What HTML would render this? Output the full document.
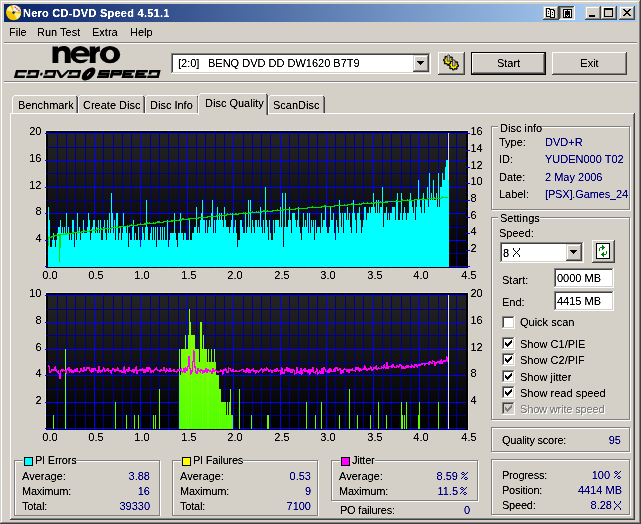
<!DOCTYPE html><html><head><meta charset="utf-8"><style>
html,body{margin:0;padding:0;background:#D4D0C8;}
#root{position:relative;width:641px;height:524px;overflow:hidden;background:#D4D0C8;font-family:"Liberation Sans", sans-serif;font-size:11px;line-height:13px;color:#000;}
#root div{position:absolute;box-sizing:border-box;white-space:pre;}
.t{filter:url(#crisp);}
.b{color:#00007F;}
</style></head><body><svg width="0" height="0" style="position:absolute"><filter id="crisp" x="-20%" y="-40%" width="140%" height="180%"><feComponentTransfer><feFuncA type="linear" slope="2" intercept="-0.35"/></feComponentTransfer></filter></svg><div id="root">
<div style="left:0px;top:0px;width:641px;height:524px;background:#404040"></div>
<div style="left:0px;top:0px;width:640px;height:523px;background:#D4D0C8"></div>
<div style="left:1px;top:1px;width:639px;height:522px;background:#808080"></div>
<div style="left:1px;top:1px;width:638px;height:521px;background:#FFFFFF"></div>
<div style="left:2px;top:2px;width:637px;height:520px;background:#D4D0C8"></div>
<div style="left:4px;top:4px;width:633px;height:18px;background:linear-gradient(to right,#0A246A 4px,#A6CAF0 584px)"></div>
<div class="t" style="left:23px;top:7px;text-align:left;color:#fff;font-weight:bold;letter-spacing:0.25px">Nero CD-DVD Speed 4.51.1</div>
<svg style="position:absolute;left:5px;top:4px" width="18" height="18">
<circle cx="8.6" cy="8.6" r="7.6" fill="#F5C400"/>
<path d="M8.6 8.6 L1.6 6 A7.6 7.6 0 0 1 5.2 1.8 Z" fill="#FFF59A"/>
<path d="M8.6 8.6 L16 10 A7.6 7.6 0 0 1 12 15.4 Z" fill="#FFF28A"/>
<path d="M8.6 8.6 L7.6 1.1 A7.6 7.6 0 0 1 16.1 7.6 Z" fill="#ECECF0"/>
<path d="M9.6 2.8 L15 7.6" stroke="#E84020" stroke-width="1.3" stroke-dasharray="1.6 0.9"/>
<circle cx="14.8" cy="3.6" r="0.7" fill="#F06030"/>
<circle cx="10.5" cy="7.8" r="0.6" fill="#F06030"/>
<circle cx="8.6" cy="8.6" r="1.3" fill="#0A246A"/>
</svg>
<div style="left:543px;top:6px;width:16px;height:14px;background:#404040"></div>
<div style="left:543px;top:6px;width:15px;height:13px;background:#D4D0C8"></div>
<div style="left:544px;top:7px;width:14px;height:12px;background:#808080"></div>
<div style="left:544px;top:7px;width:13px;height:11px;background:#FFFFFF"></div>
<div style="left:545px;top:8px;width:12px;height:10px;background:#D4D0C8"></div>
<svg style="position:absolute;left:543px;top:6px" width="16" height="14" shape-rendering="crispEdges"><path fill="#000" d="M3 2h4v1h1v8h-5zM7 3h4v1h1v8h-5z"/><path fill="#F4F2EE" d="M4 3h2v1h1v6h-3zM8 4h2v1h1v6h-3z"/><path fill="#000" d="M5 5h1v1h-1zM5 7h1v1h-1zM9 6h1v1h-1zM9 8h1v1h-1z"/></svg>
<div style="left:559px;top:6px;width:16px;height:14px;background:#FFFFFF"></div>
<div style="left:559px;top:6px;width:15px;height:13px;background:#404040"></div>
<div style="left:560px;top:7px;width:14px;height:12px;background:#D4D0C8"></div>
<div style="left:560px;top:7px;width:13px;height:11px;background:#808080"></div>
<div style="left:561px;top:8px;width:12px;height:10px;background:#D4D0C8"></div>
<svg style="position:absolute;left:559px;top:6px" width="16" height="14" shape-rendering="crispEdges"><path fill="#000" d="M4 3h9v9h-9z"/><path fill="#F4F2EE" d="M5 4h1v7h-1zM11 4h1v7h-1zM6 4h5v1h-5zM7 9h1v1h-1zM9 9h1v1h-1zM8 10h1v1h-1z"/><path fill="#000" d="M8 4h1v2h-1z"/></svg>
<div style="left:585px;top:6px;width:16px;height:14px;background:#404040"></div>
<div style="left:585px;top:6px;width:15px;height:13px;background:#D4D0C8"></div>
<div style="left:586px;top:7px;width:14px;height:12px;background:#808080"></div>
<div style="left:586px;top:7px;width:13px;height:11px;background:#FFFFFF"></div>
<div style="left:587px;top:8px;width:12px;height:10px;background:#D4D0C8"></div>
<svg style="position:absolute;left:585px;top:6px" width="16" height="14" shape-rendering="crispEdges"><path fill="#000" d="M4 9h6v2h-6z"/></svg>
<div style="left:601px;top:6px;width:16px;height:14px;background:#404040"></div>
<div style="left:601px;top:6px;width:15px;height:13px;background:#D4D0C8"></div>
<div style="left:602px;top:7px;width:14px;height:12px;background:#808080"></div>
<div style="left:602px;top:7px;width:13px;height:11px;background:#FFFFFF"></div>
<div style="left:603px;top:8px;width:12px;height:10px;background:#D4D0C8"></div>
<svg style="position:absolute;left:601px;top:6px" width="16" height="14" shape-rendering="crispEdges"><path fill="#000" d="M3 2h9v9h-9z"/><path fill="#D4D0C8" d="M4 4h7v6h-7z"/></svg>
<div style="left:619px;top:6px;width:16px;height:14px;background:#404040"></div>
<div style="left:619px;top:6px;width:15px;height:13px;background:#D4D0C8"></div>
<div style="left:620px;top:7px;width:14px;height:12px;background:#808080"></div>
<div style="left:620px;top:7px;width:13px;height:11px;background:#FFFFFF"></div>
<div style="left:621px;top:8px;width:12px;height:10px;background:#D4D0C8"></div>
<svg style="position:absolute;left:619px;top:6px" width="16" height="14" shape-rendering="crispEdges"><path fill="#000" d="M4 3h2v1h-2zM10 3h2v1h-2zM5 4h2v1h-2zM9 4h2v1h-2zM6 5h4v1h-4zM7 6h2v1h-2zM6 7h4v1h-4zM5 8h2v1h-2zM9 8h2v1h-2zM4 9h2v1h-2zM10 9h2v1h-2z"/></svg>
<div class="t" style="left:9px;top:26px;text-align:left;">File</div>
<div class="t" style="left:37px;top:26px;text-align:left;">Run Test</div>
<div class="t" style="left:92px;top:26px;text-align:left;">Extra</div>
<div class="t" style="left:130px;top:26px;text-align:left;">Help</div>
<div style="left:4px;top:42px;width:633px;height:1px;background:#808080"></div>
<div style="left:4px;top:43px;width:633px;height:1px;background:#FFFFFF"></div>
<svg style="position:absolute;left:0;top:0" width="170" height="84">
<g fill="#000">
<path d="M52.5 63V46.5H58V48.3C59.3 46.8 61.3 46 63.8 46C68 46 70.7 48.6 70.7 52.6V63H64.8V53.6C64.8 51.9 63.8 50.8 62.1 50.8C59.6 50.8 58.3 52.3 58.3 54.6V63Z"/>
<ellipse cx="80.2" cy="54.6" rx="9.7" ry="8.7"/>
<path d="M89.7 63V46.5H95.3V48.5C96.5 46.9 98 46.2 99.9 46.2V51.5C97.2 51.5 95.6 52.8 95.6 55.6V63Z"/>
<ellipse cx="110" cy="54.6" rx="10.2" ry="8.7"/>
</g>
<g fill="#D4D0C8">
<path d="M75.8 53.3C76.2 51.6 77.8 50.4 80.3 50.4C82.8 50.4 84.3 51.6 84.7 53.3Z"/>
<path d="M75.8 56.4H90V59.5H84.5C83.8 60 82.5 60 80.4 59.9C78 59.8 76.2 58.4 75.8 56.4Z"/>
<ellipse cx="110" cy="54.8" rx="4.1" ry="5"/>
</g>
<g transform="translate(0,78) skewX(-14) translate(0,-78)" fill="#000">
<rect x="14" y="69.9" width="2.7" height="8.1" rx="0.6"/><rect x="14.6" y="69.9" width="10.6" height="2.6" rx="0.6"/><rect x="14" y="75.5" width="10.6" height="2.6" rx="0.6"/>
<rect x="26.6" y="69.9" width="10.6" height="2.6" rx="0.6"/><rect x="35" y="69.9" width="2.7" height="8.1" rx="0.6"/><rect x="26" y="75.5" width="11.2" height="2.6" rx="0.6"/><rect x="26.6" y="69.9" width="2.7" height="4.6"/>
<rect x="39.3" y="72.8" width="2.2" height="2.6"/>
<rect x="43.6" y="69.9" width="10.6" height="2.6" rx="0.6"/><rect x="52" y="69.9" width="2.7" height="8.1" rx="0.6"/><rect x="43" y="75.5" width="11.2" height="2.6" rx="0.6"/><rect x="43.6" y="69.9" width="2.7" height="4.6"/>
<polygon points="54,70 56.6,70 61.2,75.6 65.6,70 68.2,70 62.2,78 59.8,78"/>
<rect x="67.8" y="69.9" width="11" height="2.6" rx="0.6"/><rect x="76.6" y="69.9" width="2.7" height="8.1" rx="0.6"/><rect x="67.2" y="75.5" width="11.6" height="2.6" rx="0.6"/><rect x="67.8" y="69.9" width="2.7" height="4.6"/>
<rect x="98" y="69.9" width="10.4" height="2.6" rx="0.6"/><rect x="97.4" y="69.9" width="2.7" height="5" rx="0.6"/><rect x="97.4" y="72.8" width="10.6" height="2.6"/><rect x="105.8" y="72.8" width="2.7" height="5" rx="0.6"/><rect x="96.8" y="75.5" width="11.2" height="2.6" rx="0.6"/>
<rect x="109.6" y="69.9" width="10.6" height="2.6" rx="0.6"/><rect x="109.6" y="69.9" width="2.7" height="8.1" rx="0.6"/><rect x="118" y="69.9" width="2.7" height="5" rx="0.6"/><rect x="109.6" y="72.8" width="10.6" height="2.6"/>
<rect x="121.6" y="69.9" width="11.6" height="2.6" rx="0.6"/><rect x="121.6" y="69.9" width="2.7" height="8.1" rx="0.6"/><rect x="121.6" y="72.8" width="9" height="2.6"/><rect x="121.6" y="75.5" width="11.6" height="2.6" rx="0.6"/>
<rect x="134.6" y="69.9" width="11.6" height="2.6" rx="0.6"/><rect x="134.6" y="69.9" width="2.7" height="8.1" rx="0.6"/><rect x="134.6" y="72.8" width="9" height="2.6"/><rect x="134.6" y="75.5" width="11.6" height="2.6" rx="0.6"/>
<rect x="147.6" y="69.9" width="10.6" height="2.6" rx="0.6"/><rect x="156" y="69.9" width="2.7" height="8.1" rx="0.6"/><rect x="147" y="75.5" width="11.2" height="2.6" rx="0.6"/><rect x="147.6" y="69.9" width="2.7" height="4.6"/>
</g>
<ellipse cx="88.6" cy="74" rx="8.3" ry="4.6" transform="rotate(-42 88.6 74)" fill="#000"/>
<path d="M87.2 75.6 L90.2 72.2" stroke="#D4D0C8" stroke-width="1.1"/>
</svg>
<div style="left:171px;top:53px;width:260px;height:21px;background:#FFFFFF"></div>
<div style="left:171px;top:53px;width:259px;height:20px;background:#808080"></div>
<div style="left:172px;top:54px;width:258px;height:19px;background:#D4D0C8"></div>
<div style="left:172px;top:54px;width:257px;height:18px;background:#404040"></div>
<div style="left:173px;top:55px;width:256px;height:17px;background:#FFFFFF"></div>
<div class="t" style="left:178px;top:57px;text-align:left;">[2:0]</div>
<div class="t" style="left:208px;top:57px;text-align:left;">BENQ DVD DD DW1620 B7T9</div>
<div style="left:413px;top:55px;width:16px;height:17px;background:#404040"></div>
<div style="left:413px;top:55px;width:15px;height:16px;background:#D4D0C8"></div>
<div style="left:414px;top:56px;width:14px;height:15px;background:#808080"></div>
<div style="left:414px;top:56px;width:13px;height:14px;background:#FFFFFF"></div>
<div style="left:415px;top:57px;width:12px;height:13px;background:#D4D0C8"></div>
<svg style="position:absolute;left:413px;top:55px" width="16" height="17" shape-rendering="crispEdges"><path fill="#000" d="M4 6h7v1h-7zM5 7h5v1h-5zM6 8h3v1h-3zM7 9h1v1h-1z"/></svg>
<div style="left:438px;top:52px;width:27px;height:23px;background:#404040"></div>
<div style="left:438px;top:52px;width:26px;height:22px;background:#FFFFFF"></div>
<div style="left:439px;top:53px;width:25px;height:21px;background:#808080"></div>
<div style="left:439px;top:53px;width:24px;height:20px;background:#D4D0C8"></div>
<div style="left:440px;top:54px;width:23px;height:19px;background:#D4D0C8"></div>
<svg style="position:absolute;left:438px;top:52px" width="27" height="23">
<polygon points="10.40,3.60 11.34,3.69 11.82,4.98 12.46,5.32 13.79,5.01 14.39,5.73 13.82,6.98 14.03,7.68 15.20,8.40 15.11,9.34 13.82,9.82 13.48,10.46 13.79,11.79 13.07,12.39 11.82,11.82 11.12,12.03 10.40,13.20 9.46,13.11 8.98,11.82 8.34,11.48 7.01,11.79 6.41,11.07 6.98,9.82 6.77,9.12 5.60,8.40 5.69,7.46 6.98,6.98 7.32,6.34 7.01,5.01 7.73,4.41 8.98,4.98 9.68,4.77" fill="#FFF200" stroke="#000" stroke-width="1.2" stroke-linejoin="round"/>
<polygon points="15.70,8.40 16.64,8.49 17.12,9.78 17.76,10.12 19.09,9.81 19.69,10.53 19.12,11.78 19.33,12.48 20.50,13.20 20.41,14.14 19.12,14.62 18.78,15.26 19.09,16.59 18.37,17.19 17.12,16.62 16.42,16.83 15.70,18.00 14.76,17.91 14.28,16.62 13.64,16.28 12.31,16.59 11.71,15.87 12.28,14.62 12.07,13.92 10.90,13.20 10.99,12.26 12.28,11.78 12.62,11.14 12.31,9.81 13.03,9.21 14.28,9.78 14.98,9.57" fill="#FFF200" stroke="#000" stroke-width="1.2" stroke-linejoin="round"/>
<path d="M9.2 4.2 L10.5 2.6 L11.8 4.2 V9.2 H9.2Z" fill="#B8B8C8" stroke="#202020" stroke-width="0.7"/>
<path d="M14.5 9 L15.8 7.4 L17.1 9 V14 H14.5Z" fill="#B8B8C8" stroke="#202020" stroke-width="0.7"/>
</svg>
<div style="left:471px;top:52px;width:75px;height:23px;background:#000"></div>
<div style="left:472px;top:53px;width:73px;height:21px;background:#404040"></div>
<div style="left:472px;top:53px;width:72px;height:20px;background:#FFFFFF"></div>
<div style="left:473px;top:54px;width:71px;height:19px;background:#808080"></div>
<div style="left:473px;top:54px;width:70px;height:18px;background:#D4D0C8"></div>
<div style="left:474px;top:55px;width:69px;height:17px;background:#D4D0C8"></div>
<div class="t" style="left:472px;top:57px;width:73px;text-align:center;">Start</div>
<div style="left:552px;top:52px;width:75px;height:23px;background:#404040"></div>
<div style="left:552px;top:52px;width:74px;height:22px;background:#FFFFFF"></div>
<div style="left:553px;top:53px;width:73px;height:21px;background:#808080"></div>
<div style="left:553px;top:53px;width:72px;height:20px;background:#D4D0C8"></div>
<div style="left:554px;top:54px;width:71px;height:19px;background:#D4D0C8"></div>
<div class="t" style="left:552px;top:57px;width:75px;text-align:center;">Exit</div>
<div style="left:4px;top:81px;width:633px;height:1px;background:#808080"></div>
<div style="left:4px;top:82px;width:633px;height:1px;background:#FFFFFF"></div>
<div style="left:10px;top:113px;width:625px;height:407px;background:#404040"></div>
<div style="left:10px;top:113px;width:624px;height:406px;background:#FFFFFF"></div>
<div style="left:11px;top:114px;width:623px;height:405px;background:#808080"></div>
<div style="left:11px;top:114px;width:622px;height:404px;background:#D4D0C8"></div>
<div style="left:12px;top:97px;width:1px;height:16px;background:#FFFFFF"></div>
<div style="left:13px;top:96px;width:1px;height:1px;background:#FFFFFF"></div>
<div style="left:14px;top:95px;width:62px;height:1px;background:#FFFFFF"></div>
<div style="left:76px;top:96px;width:1px;height:17px;background:#808080"></div>
<div style="left:77px;top:97px;width:1px;height:16px;background:#404040"></div>
<div style="left:76px;top:96px;width:1px;height:1px;background:#404040"></div>
<div style="left:13px;top:97px;width:63px;height:16px;background:#D4D0C8"></div>
<div style="left:14px;top:96px;width:62px;height:1px;background:#D4D0C8"></div>
<div class="t" style="left:18px;top:99px;text-align:left;">Benchmark</div>
<div style="left:78px;top:97px;width:1px;height:16px;background:#FFFFFF"></div>
<div style="left:79px;top:96px;width:1px;height:1px;background:#FFFFFF"></div>
<div style="left:80px;top:95px;width:63px;height:1px;background:#FFFFFF"></div>
<div style="left:143px;top:96px;width:1px;height:17px;background:#808080"></div>
<div style="left:144px;top:97px;width:1px;height:16px;background:#404040"></div>
<div style="left:143px;top:96px;width:1px;height:1px;background:#404040"></div>
<div style="left:79px;top:97px;width:64px;height:16px;background:#D4D0C8"></div>
<div style="left:80px;top:96px;width:63px;height:1px;background:#D4D0C8"></div>
<div class="t" style="left:83px;top:99px;text-align:left;">Create Disc</div>
<div style="left:145px;top:97px;width:1px;height:16px;background:#FFFFFF"></div>
<div style="left:146px;top:96px;width:1px;height:1px;background:#FFFFFF"></div>
<div style="left:147px;top:95px;width:50px;height:1px;background:#FFFFFF"></div>
<div style="left:197px;top:96px;width:1px;height:17px;background:#808080"></div>
<div style="left:198px;top:97px;width:1px;height:16px;background:#404040"></div>
<div style="left:197px;top:96px;width:1px;height:1px;background:#404040"></div>
<div style="left:146px;top:97px;width:51px;height:16px;background:#D4D0C8"></div>
<div style="left:147px;top:96px;width:50px;height:1px;background:#D4D0C8"></div>
<div class="t" style="left:150px;top:99px;text-align:left;">Disc Info</div>
<div style="left:268px;top:97px;width:1px;height:16px;background:#FFFFFF"></div>
<div style="left:269px;top:96px;width:1px;height:1px;background:#FFFFFF"></div>
<div style="left:270px;top:95px;width:53px;height:1px;background:#FFFFFF"></div>
<div style="left:323px;top:96px;width:1px;height:17px;background:#808080"></div>
<div style="left:324px;top:97px;width:1px;height:16px;background:#404040"></div>
<div style="left:323px;top:96px;width:1px;height:1px;background:#404040"></div>
<div style="left:269px;top:97px;width:54px;height:16px;background:#D4D0C8"></div>
<div style="left:270px;top:96px;width:53px;height:1px;background:#D4D0C8"></div>
<div class="t" style="left:273px;top:99px;text-align:left;">ScanDisc</div>
<div style="left:198px;top:95px;width:1px;height:20px;background:#FFFFFF"></div>
<div style="left:199px;top:94px;width:1px;height:1px;background:#FFFFFF"></div>
<div style="left:200px;top:93px;width:66px;height:1px;background:#FFFFFF"></div>
<div style="left:266px;top:94px;width:1px;height:21px;background:#808080"></div>
<div style="left:267px;top:95px;width:1px;height:20px;background:#404040"></div>
<div style="left:266px;top:94px;width:1px;height:1px;background:#404040"></div>
<div style="left:199px;top:95px;width:67px;height:20px;background:#D4D0C8"></div>
<div style="left:200px;top:94px;width:66px;height:1px;background:#D4D0C8"></div>
<div class="t" style="left:205px;top:97px;text-align:left;">Disc Quality</div>
<svg style="position:absolute;left:0;top:0" width="641" height="524" shape-rendering="crispEdges">
<defs><linearGradient id="bg1" x1="0" y1="0" x2="0" y2="1"><stop offset="0" stop-color="#242424"/><stop offset="1" stop-color="#000"/></linearGradient>
<linearGradient id="gr" gradientUnits="userSpaceOnUse" x1="0" y1="295" x2="0" y2="428"><stop offset="0" stop-color="#94FF00"/><stop offset="1" stop-color="#52FF00"/></linearGradient></defs>
<rect x="46" y="130" width="422" height="1" fill="#E4E1DA"/>
<rect x="45" y="131" width="1" height="137" fill="#E4E1DA"/>
<rect x="468" y="131" width="1" height="137" fill="#E4E1DA"/>
<rect x="46" y="131" width="422" height="137" fill="#000"/>
<rect x="48" y="133" width="418" height="134" fill="url(#bg1)"/>
<rect x="57" y="133" width="1" height="135" fill="#000090"/>
<rect x="66" y="133" width="1" height="135" fill="#000090"/>
<rect x="75" y="133" width="1" height="135" fill="#000090"/>
<rect x="85" y="133" width="1" height="135" fill="#000090"/>
<rect x="94" y="133" width="1" height="135" fill="#0000FF"/>
<rect x="103" y="133" width="1" height="135" fill="#000090"/>
<rect x="113" y="133" width="1" height="135" fill="#000090"/>
<rect x="122" y="133" width="1" height="135" fill="#000090"/>
<rect x="131" y="133" width="1" height="135" fill="#000090"/>
<rect x="140" y="133" width="1" height="135" fill="#0000FF"/>
<rect x="150" y="133" width="1" height="135" fill="#000090"/>
<rect x="159" y="133" width="1" height="135" fill="#000090"/>
<rect x="168" y="133" width="1" height="135" fill="#000090"/>
<rect x="178" y="133" width="1" height="135" fill="#000090"/>
<rect x="187" y="133" width="1" height="135" fill="#0000FF"/>
<rect x="196" y="133" width="1" height="135" fill="#000090"/>
<rect x="205" y="133" width="1" height="135" fill="#000090"/>
<rect x="215" y="133" width="1" height="135" fill="#000090"/>
<rect x="224" y="133" width="1" height="135" fill="#000090"/>
<rect x="233" y="133" width="1" height="135" fill="#0000FF"/>
<rect x="243" y="133" width="1" height="135" fill="#000090"/>
<rect x="252" y="133" width="1" height="135" fill="#000090"/>
<rect x="261" y="133" width="1" height="135" fill="#000090"/>
<rect x="270" y="133" width="1" height="135" fill="#000090"/>
<rect x="280" y="133" width="1" height="135" fill="#0000FF"/>
<rect x="289" y="133" width="1" height="135" fill="#000090"/>
<rect x="298" y="133" width="1" height="135" fill="#000090"/>
<rect x="308" y="133" width="1" height="135" fill="#000090"/>
<rect x="317" y="133" width="1" height="135" fill="#000090"/>
<rect x="326" y="133" width="1" height="135" fill="#0000FF"/>
<rect x="335" y="133" width="1" height="135" fill="#000090"/>
<rect x="345" y="133" width="1" height="135" fill="#000090"/>
<rect x="354" y="133" width="1" height="135" fill="#000090"/>
<rect x="363" y="133" width="1" height="135" fill="#000090"/>
<rect x="373" y="133" width="1" height="135" fill="#0000FF"/>
<rect x="382" y="133" width="1" height="135" fill="#000090"/>
<rect x="391" y="133" width="1" height="135" fill="#000090"/>
<rect x="401" y="133" width="1" height="135" fill="#000090"/>
<rect x="410" y="133" width="1" height="135" fill="#000090"/>
<rect x="419" y="133" width="1" height="135" fill="#0000FF"/>
<rect x="428" y="133" width="1" height="135" fill="#000090"/>
<rect x="438" y="133" width="1" height="135" fill="#000090"/>
<rect x="447" y="133" width="1" height="135" fill="#000090"/>
<rect x="456" y="133" width="1" height="135" fill="#000090"/>
<rect x="46" y="266" width="420" height="1" fill="#0000FF"/>
<rect x="45" y="266" width="3" height="1" fill="#0000FF"/>
<rect x="48" y="253" width="418" height="1" fill="#000090"/>
<rect x="46" y="253" width="2" height="1" fill="#000090"/>
<rect x="46" y="240" width="420" height="1" fill="#0000FF"/>
<rect x="45" y="240" width="3" height="1" fill="#0000FF"/>
<rect x="48" y="227" width="418" height="1" fill="#000090"/>
<rect x="46" y="227" width="2" height="1" fill="#000090"/>
<rect x="46" y="213" width="420" height="1" fill="#0000FF"/>
<rect x="45" y="213" width="3" height="1" fill="#0000FF"/>
<rect x="48" y="200" width="418" height="1" fill="#000090"/>
<rect x="46" y="200" width="2" height="1" fill="#000090"/>
<rect x="46" y="187" width="420" height="1" fill="#0000FF"/>
<rect x="45" y="187" width="3" height="1" fill="#0000FF"/>
<rect x="48" y="173" width="418" height="1" fill="#000090"/>
<rect x="46" y="173" width="2" height="1" fill="#000090"/>
<rect x="46" y="160" width="420" height="1" fill="#0000FF"/>
<rect x="45" y="160" width="3" height="1" fill="#0000FF"/>
<rect x="48" y="147" width="418" height="1" fill="#000090"/>
<rect x="46" y="147" width="2" height="1" fill="#000090"/>
<rect x="46" y="133" width="420" height="1" fill="#0000FF"/>
<rect x="45" y="133" width="3" height="1" fill="#0000FF"/>
<rect x="466" y="266" width="4" height="1" fill="#0000FF"/>
<rect x="466" y="258" width="2" height="1" fill="#000090"/>
<rect x="466" y="250" width="4" height="1" fill="#0000FF"/>
<rect x="466" y="242" width="2" height="1" fill="#000090"/>
<rect x="466" y="233" width="4" height="1" fill="#0000FF"/>
<rect x="466" y="225" width="2" height="1" fill="#000090"/>
<rect x="466" y="217" width="4" height="1" fill="#0000FF"/>
<rect x="466" y="208" width="2" height="1" fill="#000090"/>
<rect x="466" y="200" width="4" height="1" fill="#0000FF"/>
<rect x="466" y="192" width="2" height="1" fill="#000090"/>
<rect x="466" y="183" width="4" height="1" fill="#0000FF"/>
<rect x="466" y="175" width="2" height="1" fill="#000090"/>
<rect x="466" y="167" width="4" height="1" fill="#0000FF"/>
<rect x="466" y="158" width="2" height="1" fill="#000090"/>
<rect x="466" y="150" width="4" height="1" fill="#0000FF"/>
<rect x="466" y="142" width="2" height="1" fill="#000090"/>
<rect x="466" y="133" width="4" height="1" fill="#0000FF"/>
<rect x="57" y="267" width="1" height="1" fill="#000090"/>
<rect x="66" y="267" width="1" height="1" fill="#000090"/>
<rect x="75" y="267" width="1" height="1" fill="#000090"/>
<rect x="85" y="267" width="1" height="1" fill="#000090"/>
<rect x="94" y="267" width="1" height="1" fill="#0000FF"/>
<rect x="103" y="267" width="1" height="1" fill="#000090"/>
<rect x="113" y="267" width="1" height="1" fill="#000090"/>
<rect x="122" y="267" width="1" height="1" fill="#000090"/>
<rect x="131" y="267" width="1" height="1" fill="#000090"/>
<rect x="140" y="267" width="1" height="1" fill="#0000FF"/>
<rect x="150" y="267" width="1" height="1" fill="#000090"/>
<rect x="159" y="267" width="1" height="1" fill="#000090"/>
<rect x="168" y="267" width="1" height="1" fill="#000090"/>
<rect x="178" y="267" width="1" height="1" fill="#000090"/>
<rect x="187" y="267" width="1" height="1" fill="#0000FF"/>
<rect x="196" y="267" width="1" height="1" fill="#000090"/>
<rect x="205" y="267" width="1" height="1" fill="#000090"/>
<rect x="215" y="267" width="1" height="1" fill="#000090"/>
<rect x="224" y="267" width="1" height="1" fill="#000090"/>
<rect x="233" y="267" width="1" height="1" fill="#0000FF"/>
<rect x="243" y="267" width="1" height="1" fill="#000090"/>
<rect x="252" y="267" width="1" height="1" fill="#000090"/>
<rect x="261" y="267" width="1" height="1" fill="#000090"/>
<rect x="270" y="267" width="1" height="1" fill="#000090"/>
<rect x="280" y="267" width="1" height="1" fill="#0000FF"/>
<rect x="289" y="267" width="1" height="1" fill="#000090"/>
<rect x="298" y="267" width="1" height="1" fill="#000090"/>
<rect x="308" y="267" width="1" height="1" fill="#000090"/>
<rect x="317" y="267" width="1" height="1" fill="#000090"/>
<rect x="326" y="267" width="1" height="1" fill="#0000FF"/>
<rect x="335" y="267" width="1" height="1" fill="#000090"/>
<rect x="345" y="267" width="1" height="1" fill="#000090"/>
<rect x="354" y="267" width="1" height="1" fill="#000090"/>
<rect x="363" y="267" width="1" height="1" fill="#000090"/>
<rect x="373" y="267" width="1" height="1" fill="#0000FF"/>
<rect x="382" y="267" width="1" height="1" fill="#000090"/>
<rect x="391" y="267" width="1" height="1" fill="#000090"/>
<rect x="401" y="267" width="1" height="1" fill="#000090"/>
<rect x="410" y="267" width="1" height="1" fill="#000090"/>
<rect x="419" y="267" width="1" height="1" fill="#0000FF"/>
<rect x="428" y="267" width="1" height="1" fill="#000090"/>
<rect x="438" y="267" width="1" height="1" fill="#000090"/>
<rect x="447" y="267" width="1" height="1" fill="#000090"/>
<rect x="456" y="267" width="1" height="1" fill="#000090"/>
<rect x="448" y="133" width="1" height="134" fill="#D8D8D8"/>
<rect x="48" y="207" width="1" height="60" fill="#00FFFF"/>
<rect x="49" y="220" width="1" height="47" fill="#00FFFF"/>
<rect x="50" y="247" width="1" height="20" fill="#00FFFF"/>
<rect x="51" y="247" width="1" height="20" fill="#00FFFF"/>
<rect x="52" y="240" width="1" height="27" fill="#00FFFF"/>
<rect x="53" y="233" width="1" height="34" fill="#00FFFF"/>
<rect x="54" y="240" width="1" height="27" fill="#00FFFF"/>
<rect x="55" y="247" width="1" height="20" fill="#00FFFF"/>
<rect x="56" y="240" width="1" height="27" fill="#00FFFF"/>
<rect x="57" y="233" width="1" height="34" fill="#00FFFF"/>
<rect x="58" y="227" width="1" height="40" fill="#00FFFF"/>
<rect x="59" y="227" width="1" height="40" fill="#00FFFF"/>
<rect x="60" y="220" width="1" height="47" fill="#00FFFF"/>
<rect x="61" y="233" width="1" height="34" fill="#00FFFF"/>
<rect x="62" y="227" width="1" height="40" fill="#00FFFF"/>
<rect x="63" y="233" width="1" height="34" fill="#00FFFF"/>
<rect x="64" y="227" width="1" height="40" fill="#00FFFF"/>
<rect x="65" y="233" width="1" height="34" fill="#00FFFF"/>
<rect x="66" y="213" width="1" height="54" fill="#00FFFF"/>
<rect x="67" y="233" width="1" height="34" fill="#00FFFF"/>
<rect x="68" y="227" width="1" height="40" fill="#00FFFF"/>
<rect x="69" y="240" width="1" height="27" fill="#00FFFF"/>
<rect x="70" y="233" width="1" height="34" fill="#00FFFF"/>
<rect x="71" y="240" width="1" height="27" fill="#00FFFF"/>
<rect x="72" y="220" width="1" height="47" fill="#00FFFF"/>
<rect x="73" y="220" width="1" height="47" fill="#00FFFF"/>
<rect x="74" y="247" width="1" height="20" fill="#00FFFF"/>
<rect x="75" y="233" width="1" height="34" fill="#00FFFF"/>
<rect x="76" y="240" width="1" height="27" fill="#00FFFF"/>
<rect x="77" y="213" width="1" height="54" fill="#00FFFF"/>
<rect x="78" y="233" width="1" height="34" fill="#00FFFF"/>
<rect x="79" y="227" width="1" height="40" fill="#00FFFF"/>
<rect x="80" y="240" width="1" height="27" fill="#00FFFF"/>
<rect x="81" y="233" width="1" height="34" fill="#00FFFF"/>
<rect x="82" y="233" width="1" height="34" fill="#00FFFF"/>
<rect x="83" y="220" width="1" height="47" fill="#00FFFF"/>
<rect x="84" y="233" width="1" height="34" fill="#00FFFF"/>
<rect x="85" y="233" width="1" height="34" fill="#00FFFF"/>
<rect x="86" y="233" width="1" height="34" fill="#00FFFF"/>
<rect x="87" y="227" width="1" height="40" fill="#00FFFF"/>
<rect x="88" y="213" width="1" height="54" fill="#00FFFF"/>
<rect x="89" y="220" width="1" height="47" fill="#00FFFF"/>
<rect x="90" y="240" width="1" height="27" fill="#00FFFF"/>
<rect x="91" y="233" width="1" height="34" fill="#00FFFF"/>
<rect x="92" y="227" width="1" height="40" fill="#00FFFF"/>
<rect x="93" y="220" width="1" height="47" fill="#00FFFF"/>
<rect x="94" y="220" width="1" height="47" fill="#00FFFF"/>
<rect x="95" y="233" width="1" height="34" fill="#00FFFF"/>
<rect x="96" y="227" width="1" height="40" fill="#00FFFF"/>
<rect x="97" y="233" width="1" height="34" fill="#00FFFF"/>
<rect x="98" y="220" width="1" height="47" fill="#00FFFF"/>
<rect x="99" y="233" width="1" height="34" fill="#00FFFF"/>
<rect x="100" y="220" width="1" height="47" fill="#00FFFF"/>
<rect x="101" y="240" width="1" height="27" fill="#00FFFF"/>
<rect x="102" y="240" width="1" height="27" fill="#00FFFF"/>
<rect x="103" y="227" width="1" height="40" fill="#00FFFF"/>
<rect x="104" y="220" width="1" height="47" fill="#00FFFF"/>
<rect x="105" y="233" width="1" height="34" fill="#00FFFF"/>
<rect x="106" y="240" width="1" height="27" fill="#00FFFF"/>
<rect x="107" y="220" width="1" height="47" fill="#00FFFF"/>
<rect x="108" y="233" width="1" height="34" fill="#00FFFF"/>
<rect x="109" y="213" width="1" height="54" fill="#00FFFF"/>
<rect x="110" y="233" width="1" height="34" fill="#00FFFF"/>
<rect x="111" y="193" width="1" height="74" fill="#00FFFF"/>
<rect x="112" y="213" width="1" height="54" fill="#00FFFF"/>
<rect x="113" y="233" width="1" height="34" fill="#00FFFF"/>
<rect x="114" y="220" width="1" height="47" fill="#00FFFF"/>
<rect x="115" y="240" width="1" height="27" fill="#00FFFF"/>
<rect x="116" y="213" width="1" height="54" fill="#00FFFF"/>
<rect x="117" y="213" width="1" height="54" fill="#00FFFF"/>
<rect x="118" y="240" width="1" height="27" fill="#00FFFF"/>
<rect x="119" y="233" width="1" height="34" fill="#00FFFF"/>
<rect x="120" y="227" width="1" height="40" fill="#00FFFF"/>
<rect x="121" y="240" width="1" height="27" fill="#00FFFF"/>
<rect x="122" y="233" width="1" height="34" fill="#00FFFF"/>
<rect x="123" y="213" width="1" height="54" fill="#00FFFF"/>
<rect x="124" y="227" width="1" height="40" fill="#00FFFF"/>
<rect x="125" y="227" width="1" height="40" fill="#00FFFF"/>
<rect x="126" y="233" width="1" height="34" fill="#00FFFF"/>
<rect x="127" y="227" width="1" height="40" fill="#00FFFF"/>
<rect x="128" y="247" width="1" height="20" fill="#00FFFF"/>
<rect x="129" y="233" width="1" height="34" fill="#00FFFF"/>
<rect x="130" y="240" width="1" height="27" fill="#00FFFF"/>
<rect x="131" y="240" width="1" height="27" fill="#00FFFF"/>
<rect x="132" y="227" width="1" height="40" fill="#00FFFF"/>
<rect x="133" y="220" width="1" height="47" fill="#00FFFF"/>
<rect x="134" y="240" width="1" height="27" fill="#00FFFF"/>
<rect x="135" y="233" width="1" height="34" fill="#00FFFF"/>
<rect x="136" y="240" width="1" height="27" fill="#00FFFF"/>
<rect x="137" y="240" width="1" height="27" fill="#00FFFF"/>
<rect x="138" y="227" width="1" height="40" fill="#00FFFF"/>
<rect x="139" y="240" width="1" height="27" fill="#00FFFF"/>
<rect x="140" y="247" width="1" height="20" fill="#00FFFF"/>
<rect x="141" y="240" width="1" height="27" fill="#00FFFF"/>
<rect x="142" y="227" width="1" height="40" fill="#00FFFF"/>
<rect x="143" y="233" width="1" height="34" fill="#00FFFF"/>
<rect x="144" y="240" width="1" height="27" fill="#00FFFF"/>
<rect x="145" y="227" width="1" height="40" fill="#00FFFF"/>
<rect x="146" y="200" width="1" height="67" fill="#00FFFF"/>
<rect x="147" y="227" width="1" height="40" fill="#00FFFF"/>
<rect x="148" y="240" width="1" height="27" fill="#00FFFF"/>
<rect x="149" y="240" width="1" height="27" fill="#00FFFF"/>
<rect x="150" y="233" width="1" height="34" fill="#00FFFF"/>
<rect x="151" y="227" width="1" height="40" fill="#00FFFF"/>
<rect x="152" y="240" width="1" height="27" fill="#00FFFF"/>
<rect x="153" y="227" width="1" height="40" fill="#00FFFF"/>
<rect x="154" y="240" width="1" height="27" fill="#00FFFF"/>
<rect x="155" y="227" width="1" height="40" fill="#00FFFF"/>
<rect x="156" y="247" width="1" height="20" fill="#00FFFF"/>
<rect x="157" y="227" width="1" height="40" fill="#00FFFF"/>
<rect x="158" y="240" width="1" height="27" fill="#00FFFF"/>
<rect x="159" y="240" width="1" height="27" fill="#00FFFF"/>
<rect x="160" y="227" width="1" height="40" fill="#00FFFF"/>
<rect x="161" y="240" width="1" height="27" fill="#00FFFF"/>
<rect x="162" y="227" width="1" height="40" fill="#00FFFF"/>
<rect x="163" y="240" width="1" height="27" fill="#00FFFF"/>
<rect x="164" y="227" width="1" height="40" fill="#00FFFF"/>
<rect x="165" y="240" width="1" height="27" fill="#00FFFF"/>
<rect x="166" y="240" width="1" height="27" fill="#00FFFF"/>
<rect x="167" y="220" width="1" height="47" fill="#00FFFF"/>
<rect x="168" y="247" width="1" height="20" fill="#00FFFF"/>
<rect x="169" y="240" width="1" height="27" fill="#00FFFF"/>
<rect x="170" y="233" width="1" height="34" fill="#00FFFF"/>
<rect x="171" y="233" width="1" height="34" fill="#00FFFF"/>
<rect x="172" y="233" width="1" height="34" fill="#00FFFF"/>
<rect x="173" y="233" width="1" height="34" fill="#00FFFF"/>
<rect x="174" y="213" width="1" height="54" fill="#00FFFF"/>
<rect x="175" y="233" width="1" height="34" fill="#00FFFF"/>
<rect x="176" y="240" width="1" height="27" fill="#00FFFF"/>
<rect x="177" y="247" width="1" height="20" fill="#00FFFF"/>
<rect x="178" y="233" width="1" height="34" fill="#00FFFF"/>
<rect x="179" y="233" width="1" height="34" fill="#00FFFF"/>
<rect x="180" y="213" width="1" height="54" fill="#00FFFF"/>
<rect x="181" y="233" width="1" height="34" fill="#00FFFF"/>
<rect x="182" y="233" width="1" height="34" fill="#00FFFF"/>
<rect x="183" y="240" width="1" height="27" fill="#00FFFF"/>
<rect x="184" y="233" width="1" height="34" fill="#00FFFF"/>
<rect x="185" y="233" width="1" height="34" fill="#00FFFF"/>
<rect x="186" y="240" width="1" height="27" fill="#00FFFF"/>
<rect x="187" y="240" width="1" height="27" fill="#00FFFF"/>
<rect x="188" y="240" width="1" height="27" fill="#00FFFF"/>
<rect x="189" y="220" width="1" height="47" fill="#00FFFF"/>
<rect x="190" y="240" width="1" height="27" fill="#00FFFF"/>
<rect x="191" y="240" width="1" height="27" fill="#00FFFF"/>
<rect x="192" y="233" width="1" height="34" fill="#00FFFF"/>
<rect x="193" y="233" width="1" height="34" fill="#00FFFF"/>
<rect x="194" y="227" width="1" height="40" fill="#00FFFF"/>
<rect x="195" y="227" width="1" height="40" fill="#00FFFF"/>
<rect x="196" y="207" width="1" height="60" fill="#00FFFF"/>
<rect x="197" y="233" width="1" height="34" fill="#00FFFF"/>
<rect x="198" y="227" width="1" height="40" fill="#00FFFF"/>
<rect x="199" y="233" width="1" height="34" fill="#00FFFF"/>
<rect x="200" y="220" width="1" height="47" fill="#00FFFF"/>
<rect x="201" y="213" width="1" height="54" fill="#00FFFF"/>
<rect x="202" y="200" width="1" height="67" fill="#00FFFF"/>
<rect x="203" y="220" width="1" height="47" fill="#00FFFF"/>
<rect x="204" y="220" width="1" height="47" fill="#00FFFF"/>
<rect x="205" y="233" width="1" height="34" fill="#00FFFF"/>
<rect x="206" y="220" width="1" height="47" fill="#00FFFF"/>
<rect x="207" y="233" width="1" height="34" fill="#00FFFF"/>
<rect x="208" y="227" width="1" height="40" fill="#00FFFF"/>
<rect x="209" y="220" width="1" height="47" fill="#00FFFF"/>
<rect x="210" y="227" width="1" height="40" fill="#00FFFF"/>
<rect x="211" y="213" width="1" height="54" fill="#00FFFF"/>
<rect x="212" y="200" width="1" height="67" fill="#00FFFF"/>
<rect x="213" y="233" width="1" height="34" fill="#00FFFF"/>
<rect x="214" y="220" width="1" height="47" fill="#00FFFF"/>
<rect x="215" y="233" width="1" height="34" fill="#00FFFF"/>
<rect x="216" y="220" width="1" height="47" fill="#00FFFF"/>
<rect x="217" y="207" width="1" height="60" fill="#00FFFF"/>
<rect x="218" y="220" width="1" height="47" fill="#00FFFF"/>
<rect x="219" y="213" width="1" height="54" fill="#00FFFF"/>
<rect x="220" y="220" width="1" height="47" fill="#00FFFF"/>
<rect x="221" y="213" width="1" height="54" fill="#00FFFF"/>
<rect x="222" y="220" width="1" height="47" fill="#00FFFF"/>
<rect x="223" y="227" width="1" height="40" fill="#00FFFF"/>
<rect x="224" y="207" width="1" height="60" fill="#00FFFF"/>
<rect x="225" y="220" width="1" height="47" fill="#00FFFF"/>
<rect x="226" y="227" width="1" height="40" fill="#00FFFF"/>
<rect x="227" y="227" width="1" height="40" fill="#00FFFF"/>
<rect x="228" y="227" width="1" height="40" fill="#00FFFF"/>
<rect x="229" y="233" width="1" height="34" fill="#00FFFF"/>
<rect x="230" y="227" width="1" height="40" fill="#00FFFF"/>
<rect x="231" y="220" width="1" height="47" fill="#00FFFF"/>
<rect x="232" y="213" width="1" height="54" fill="#00FFFF"/>
<rect x="233" y="233" width="1" height="34" fill="#00FFFF"/>
<rect x="234" y="227" width="1" height="40" fill="#00FFFF"/>
<rect x="235" y="220" width="1" height="47" fill="#00FFFF"/>
<rect x="236" y="233" width="1" height="34" fill="#00FFFF"/>
<rect x="237" y="247" width="1" height="20" fill="#00FFFF"/>
<rect x="238" y="240" width="1" height="27" fill="#00FFFF"/>
<rect x="239" y="240" width="1" height="27" fill="#00FFFF"/>
<rect x="240" y="220" width="1" height="47" fill="#00FFFF"/>
<rect x="241" y="220" width="1" height="47" fill="#00FFFF"/>
<rect x="242" y="227" width="1" height="40" fill="#00FFFF"/>
<rect x="243" y="233" width="1" height="34" fill="#00FFFF"/>
<rect x="244" y="233" width="1" height="34" fill="#00FFFF"/>
<rect x="245" y="213" width="1" height="54" fill="#00FFFF"/>
<rect x="246" y="233" width="1" height="34" fill="#00FFFF"/>
<rect x="247" y="227" width="1" height="40" fill="#00FFFF"/>
<rect x="248" y="200" width="1" height="67" fill="#00FFFF"/>
<rect x="249" y="227" width="1" height="40" fill="#00FFFF"/>
<rect x="250" y="200" width="1" height="67" fill="#00FFFF"/>
<rect x="251" y="233" width="1" height="34" fill="#00FFFF"/>
<rect x="252" y="220" width="1" height="47" fill="#00FFFF"/>
<rect x="253" y="227" width="1" height="40" fill="#00FFFF"/>
<rect x="254" y="233" width="1" height="34" fill="#00FFFF"/>
<rect x="255" y="220" width="1" height="47" fill="#00FFFF"/>
<rect x="256" y="220" width="1" height="47" fill="#00FFFF"/>
<rect x="257" y="227" width="1" height="40" fill="#00FFFF"/>
<rect x="258" y="220" width="1" height="47" fill="#00FFFF"/>
<rect x="259" y="227" width="1" height="40" fill="#00FFFF"/>
<rect x="260" y="207" width="1" height="60" fill="#00FFFF"/>
<rect x="261" y="227" width="1" height="40" fill="#00FFFF"/>
<rect x="262" y="233" width="1" height="34" fill="#00FFFF"/>
<rect x="263" y="220" width="1" height="47" fill="#00FFFF"/>
<rect x="264" y="233" width="1" height="34" fill="#00FFFF"/>
<rect x="265" y="187" width="1" height="80" fill="#00FFFF"/>
<rect x="266" y="220" width="1" height="47" fill="#00FFFF"/>
<rect x="267" y="227" width="1" height="40" fill="#00FFFF"/>
<rect x="268" y="240" width="1" height="27" fill="#00FFFF"/>
<rect x="269" y="220" width="1" height="47" fill="#00FFFF"/>
<rect x="270" y="233" width="1" height="34" fill="#00FFFF"/>
<rect x="271" y="240" width="1" height="27" fill="#00FFFF"/>
<rect x="272" y="240" width="1" height="27" fill="#00FFFF"/>
<rect x="273" y="220" width="1" height="47" fill="#00FFFF"/>
<rect x="274" y="233" width="1" height="34" fill="#00FFFF"/>
<rect x="275" y="220" width="1" height="47" fill="#00FFFF"/>
<rect x="276" y="220" width="1" height="47" fill="#00FFFF"/>
<rect x="277" y="220" width="1" height="47" fill="#00FFFF"/>
<rect x="278" y="220" width="1" height="47" fill="#00FFFF"/>
<rect x="279" y="227" width="1" height="40" fill="#00FFFF"/>
<rect x="280" y="207" width="1" height="60" fill="#00FFFF"/>
<rect x="281" y="227" width="1" height="40" fill="#00FFFF"/>
<rect x="282" y="193" width="1" height="74" fill="#00FFFF"/>
<rect x="283" y="247" width="1" height="20" fill="#00FFFF"/>
<rect x="284" y="227" width="1" height="40" fill="#00FFFF"/>
<rect x="285" y="193" width="1" height="74" fill="#00FFFF"/>
<rect x="286" y="227" width="1" height="40" fill="#00FFFF"/>
<rect x="287" y="227" width="1" height="40" fill="#00FFFF"/>
<rect x="288" y="220" width="1" height="47" fill="#00FFFF"/>
<rect x="289" y="207" width="1" height="60" fill="#00FFFF"/>
<rect x="290" y="220" width="1" height="47" fill="#00FFFF"/>
<rect x="291" y="233" width="1" height="34" fill="#00FFFF"/>
<rect x="292" y="213" width="1" height="54" fill="#00FFFF"/>
<rect x="293" y="213" width="1" height="54" fill="#00FFFF"/>
<rect x="294" y="213" width="1" height="54" fill="#00FFFF"/>
<rect x="295" y="220" width="1" height="47" fill="#00FFFF"/>
<rect x="296" y="227" width="1" height="40" fill="#00FFFF"/>
<rect x="297" y="220" width="1" height="47" fill="#00FFFF"/>
<rect x="298" y="207" width="1" height="60" fill="#00FFFF"/>
<rect x="299" y="227" width="1" height="40" fill="#00FFFF"/>
<rect x="300" y="233" width="1" height="34" fill="#00FFFF"/>
<rect x="301" y="240" width="1" height="27" fill="#00FFFF"/>
<rect x="302" y="227" width="1" height="40" fill="#00FFFF"/>
<rect x="303" y="213" width="1" height="54" fill="#00FFFF"/>
<rect x="304" y="227" width="1" height="40" fill="#00FFFF"/>
<rect x="305" y="220" width="1" height="47" fill="#00FFFF"/>
<rect x="306" y="227" width="1" height="40" fill="#00FFFF"/>
<rect x="307" y="213" width="1" height="54" fill="#00FFFF"/>
<rect x="308" y="233" width="1" height="34" fill="#00FFFF"/>
<rect x="309" y="213" width="1" height="54" fill="#00FFFF"/>
<rect x="310" y="233" width="1" height="34" fill="#00FFFF"/>
<rect x="311" y="220" width="1" height="47" fill="#00FFFF"/>
<rect x="312" y="227" width="1" height="40" fill="#00FFFF"/>
<rect x="313" y="220" width="1" height="47" fill="#00FFFF"/>
<rect x="314" y="240" width="1" height="27" fill="#00FFFF"/>
<rect x="315" y="220" width="1" height="47" fill="#00FFFF"/>
<rect x="316" y="233" width="1" height="34" fill="#00FFFF"/>
<rect x="317" y="227" width="1" height="40" fill="#00FFFF"/>
<rect x="318" y="227" width="1" height="40" fill="#00FFFF"/>
<rect x="319" y="227" width="1" height="40" fill="#00FFFF"/>
<rect x="320" y="233" width="1" height="34" fill="#00FFFF"/>
<rect x="321" y="213" width="1" height="54" fill="#00FFFF"/>
<rect x="322" y="227" width="1" height="40" fill="#00FFFF"/>
<rect x="323" y="220" width="1" height="47" fill="#00FFFF"/>
<rect x="324" y="220" width="1" height="47" fill="#00FFFF"/>
<rect x="325" y="207" width="1" height="60" fill="#00FFFF"/>
<rect x="326" y="227" width="1" height="40" fill="#00FFFF"/>
<rect x="327" y="233" width="1" height="34" fill="#00FFFF"/>
<rect x="328" y="233" width="1" height="34" fill="#00FFFF"/>
<rect x="329" y="227" width="1" height="40" fill="#00FFFF"/>
<rect x="330" y="207" width="1" height="60" fill="#00FFFF"/>
<rect x="331" y="220" width="1" height="47" fill="#00FFFF"/>
<rect x="332" y="220" width="1" height="47" fill="#00FFFF"/>
<rect x="333" y="213" width="1" height="54" fill="#00FFFF"/>
<rect x="334" y="233" width="1" height="34" fill="#00FFFF"/>
<rect x="335" y="240" width="1" height="27" fill="#00FFFF"/>
<rect x="336" y="220" width="1" height="47" fill="#00FFFF"/>
<rect x="337" y="227" width="1" height="40" fill="#00FFFF"/>
<rect x="338" y="233" width="1" height="34" fill="#00FFFF"/>
<rect x="339" y="200" width="1" height="67" fill="#00FFFF"/>
<rect x="340" y="213" width="1" height="54" fill="#00FFFF"/>
<rect x="341" y="227" width="1" height="40" fill="#00FFFF"/>
<rect x="342" y="213" width="1" height="54" fill="#00FFFF"/>
<rect x="343" y="233" width="1" height="34" fill="#00FFFF"/>
<rect x="344" y="213" width="1" height="54" fill="#00FFFF"/>
<rect x="345" y="213" width="1" height="54" fill="#00FFFF"/>
<rect x="346" y="220" width="1" height="47" fill="#00FFFF"/>
<rect x="347" y="207" width="1" height="60" fill="#00FFFF"/>
<rect x="348" y="220" width="1" height="47" fill="#00FFFF"/>
<rect x="349" y="213" width="1" height="54" fill="#00FFFF"/>
<rect x="350" y="227" width="1" height="40" fill="#00FFFF"/>
<rect x="351" y="233" width="1" height="34" fill="#00FFFF"/>
<rect x="352" y="213" width="1" height="54" fill="#00FFFF"/>
<rect x="353" y="200" width="1" height="67" fill="#00FFFF"/>
<rect x="354" y="213" width="1" height="54" fill="#00FFFF"/>
<rect x="355" y="220" width="1" height="47" fill="#00FFFF"/>
<rect x="356" y="233" width="1" height="34" fill="#00FFFF"/>
<rect x="357" y="213" width="1" height="54" fill="#00FFFF"/>
<rect x="358" y="213" width="1" height="54" fill="#00FFFF"/>
<rect x="359" y="207" width="1" height="60" fill="#00FFFF"/>
<rect x="360" y="220" width="1" height="47" fill="#00FFFF"/>
<rect x="361" y="233" width="1" height="34" fill="#00FFFF"/>
<rect x="362" y="227" width="1" height="40" fill="#00FFFF"/>
<rect x="363" y="220" width="1" height="47" fill="#00FFFF"/>
<rect x="364" y="207" width="1" height="60" fill="#00FFFF"/>
<rect x="365" y="207" width="1" height="60" fill="#00FFFF"/>
<rect x="366" y="220" width="1" height="47" fill="#00FFFF"/>
<rect x="367" y="213" width="1" height="54" fill="#00FFFF"/>
<rect x="368" y="213" width="1" height="54" fill="#00FFFF"/>
<rect x="369" y="207" width="1" height="60" fill="#00FFFF"/>
<rect x="370" y="213" width="1" height="54" fill="#00FFFF"/>
<rect x="371" y="207" width="1" height="60" fill="#00FFFF"/>
<rect x="372" y="207" width="1" height="60" fill="#00FFFF"/>
<rect x="373" y="193" width="1" height="74" fill="#00FFFF"/>
<rect x="374" y="207" width="1" height="60" fill="#00FFFF"/>
<rect x="375" y="213" width="1" height="54" fill="#00FFFF"/>
<rect x="376" y="200" width="1" height="67" fill="#00FFFF"/>
<rect x="377" y="213" width="1" height="54" fill="#00FFFF"/>
<rect x="378" y="200" width="1" height="67" fill="#00FFFF"/>
<rect x="379" y="213" width="1" height="54" fill="#00FFFF"/>
<rect x="380" y="207" width="1" height="60" fill="#00FFFF"/>
<rect x="381" y="207" width="1" height="60" fill="#00FFFF"/>
<rect x="382" y="187" width="1" height="80" fill="#00FFFF"/>
<rect x="383" y="227" width="1" height="40" fill="#00FFFF"/>
<rect x="384" y="213" width="1" height="54" fill="#00FFFF"/>
<rect x="385" y="213" width="1" height="54" fill="#00FFFF"/>
<rect x="386" y="207" width="1" height="60" fill="#00FFFF"/>
<rect x="387" y="220" width="1" height="47" fill="#00FFFF"/>
<rect x="388" y="213" width="1" height="54" fill="#00FFFF"/>
<rect x="389" y="220" width="1" height="47" fill="#00FFFF"/>
<rect x="390" y="213" width="1" height="54" fill="#00FFFF"/>
<rect x="391" y="213" width="1" height="54" fill="#00FFFF"/>
<rect x="392" y="207" width="1" height="60" fill="#00FFFF"/>
<rect x="393" y="207" width="1" height="60" fill="#00FFFF"/>
<rect x="394" y="207" width="1" height="60" fill="#00FFFF"/>
<rect x="395" y="220" width="1" height="47" fill="#00FFFF"/>
<rect x="396" y="200" width="1" height="67" fill="#00FFFF"/>
<rect x="397" y="193" width="1" height="74" fill="#00FFFF"/>
<rect x="398" y="220" width="1" height="47" fill="#00FFFF"/>
<rect x="399" y="220" width="1" height="47" fill="#00FFFF"/>
<rect x="400" y="213" width="1" height="54" fill="#00FFFF"/>
<rect x="401" y="193" width="1" height="74" fill="#00FFFF"/>
<rect x="402" y="220" width="1" height="47" fill="#00FFFF"/>
<rect x="403" y="213" width="1" height="54" fill="#00FFFF"/>
<rect x="404" y="207" width="1" height="60" fill="#00FFFF"/>
<rect x="405" y="213" width="1" height="54" fill="#00FFFF"/>
<rect x="406" y="220" width="1" height="47" fill="#00FFFF"/>
<rect x="407" y="213" width="1" height="54" fill="#00FFFF"/>
<rect x="408" y="213" width="1" height="54" fill="#00FFFF"/>
<rect x="409" y="200" width="1" height="67" fill="#00FFFF"/>
<rect x="410" y="193" width="1" height="74" fill="#00FFFF"/>
<rect x="411" y="200" width="1" height="67" fill="#00FFFF"/>
<rect x="412" y="207" width="1" height="60" fill="#00FFFF"/>
<rect x="413" y="213" width="1" height="54" fill="#00FFFF"/>
<rect x="414" y="200" width="1" height="67" fill="#00FFFF"/>
<rect x="415" y="220" width="1" height="47" fill="#00FFFF"/>
<rect x="416" y="207" width="1" height="60" fill="#00FFFF"/>
<rect x="417" y="200" width="1" height="67" fill="#00FFFF"/>
<rect x="418" y="180" width="1" height="87" fill="#00FFFF"/>
<rect x="419" y="200" width="1" height="67" fill="#00FFFF"/>
<rect x="420" y="207" width="1" height="60" fill="#00FFFF"/>
<rect x="421" y="213" width="1" height="54" fill="#00FFFF"/>
<rect x="422" y="200" width="1" height="67" fill="#00FFFF"/>
<rect x="423" y="193" width="1" height="74" fill="#00FFFF"/>
<rect x="424" y="213" width="1" height="54" fill="#00FFFF"/>
<rect x="425" y="200" width="1" height="67" fill="#00FFFF"/>
<rect x="426" y="200" width="1" height="67" fill="#00FFFF"/>
<rect x="427" y="187" width="1" height="80" fill="#00FFFF"/>
<rect x="428" y="207" width="1" height="60" fill="#00FFFF"/>
<rect x="429" y="173" width="1" height="94" fill="#00FFFF"/>
<rect x="430" y="200" width="1" height="67" fill="#00FFFF"/>
<rect x="431" y="193" width="1" height="74" fill="#00FFFF"/>
<rect x="432" y="200" width="1" height="67" fill="#00FFFF"/>
<rect x="433" y="180" width="1" height="87" fill="#00FFFF"/>
<rect x="434" y="200" width="1" height="67" fill="#00FFFF"/>
<rect x="435" y="200" width="1" height="67" fill="#00FFFF"/>
<rect x="436" y="193" width="1" height="74" fill="#00FFFF"/>
<rect x="437" y="207" width="1" height="60" fill="#00FFFF"/>
<rect x="438" y="173" width="1" height="94" fill="#00FFFF"/>
<rect x="439" y="207" width="1" height="60" fill="#00FFFF"/>
<rect x="440" y="187" width="1" height="80" fill="#00FFFF"/>
<rect x="441" y="187" width="1" height="80" fill="#00FFFF"/>
<rect x="442" y="173" width="1" height="94" fill="#00FFFF"/>
<rect x="443" y="180" width="1" height="87" fill="#00FFFF"/>
<rect x="444" y="180" width="1" height="87" fill="#00FFFF"/>
<rect x="445" y="167" width="1" height="100" fill="#00FFFF"/>
<rect x="446" y="160" width="1" height="107" fill="#00FFFF"/>
<rect x="447" y="160" width="1" height="107" fill="#00FFFF"/>
<rect x="448" y="180" width="1" height="87" fill="#00FFFF"/>
<rect x="48" y="237" width="1" height="1" fill="#00E000"/>
<rect x="49" y="237" width="1" height="1" fill="#00E000"/>
<rect x="50" y="237" width="1" height="1" fill="#00E000"/>
<rect x="51" y="236" width="1" height="2" fill="#00E000"/>
<rect x="52" y="236" width="1" height="1" fill="#00E000"/>
<rect x="53" y="236" width="1" height="1" fill="#00E000"/>
<rect x="53" y="235" width="1" height="1" fill="#00E000"/>
<rect x="54" y="235" width="1" height="2" fill="#00E000"/>
<rect x="55" y="235" width="1" height="1" fill="#00E000"/>
<rect x="56" y="235" width="1" height="1" fill="#00E000"/>
<rect x="57" y="235" width="1" height="1" fill="#00E000"/>
<rect x="58" y="235" width="1" height="1" fill="#00E000"/>
<rect x="58" y="234" width="1" height="1" fill="#00E000"/>
<rect x="59" y="234" width="1" height="2" fill="#00E000"/>
<rect x="60" y="234" width="1" height="1" fill="#00E000"/>
<rect x="61" y="234" width="1" height="1" fill="#00E000"/>
<rect x="62" y="234" width="1" height="1" fill="#00E000"/>
<rect x="63" y="234" width="1" height="1" fill="#00E000"/>
<rect x="63" y="233" width="1" height="1" fill="#00E000"/>
<rect x="64" y="234" width="1" height="1" fill="#00E000"/>
<rect x="65" y="234" width="1" height="1" fill="#00E000"/>
<rect x="65" y="233" width="1" height="1" fill="#00E000"/>
<rect x="66" y="233" width="1" height="2" fill="#00E000"/>
<rect x="67" y="233" width="1" height="1" fill="#00E000"/>
<rect x="68" y="233" width="1" height="1" fill="#00E000"/>
<rect x="69" y="233" width="1" height="1" fill="#00E000"/>
<rect x="70" y="233" width="1" height="1" fill="#00E000"/>
<rect x="71" y="233" width="1" height="1" fill="#00E000"/>
<rect x="72" y="233" width="1" height="1" fill="#00E000"/>
<rect x="72" y="232" width="1" height="1" fill="#00E000"/>
<rect x="73" y="232" width="1" height="2" fill="#00E000"/>
<rect x="74" y="232" width="1" height="1" fill="#00E000"/>
<rect x="75" y="232" width="1" height="1" fill="#00E000"/>
<rect x="76" y="232" width="1" height="1" fill="#00E000"/>
<rect x="77" y="232" width="1" height="1" fill="#00E000"/>
<rect x="78" y="232" width="1" height="1" fill="#00E000"/>
<rect x="78" y="231" width="1" height="1" fill="#00E000"/>
<rect x="79" y="232" width="1" height="1" fill="#00E000"/>
<rect x="80" y="232" width="1" height="1" fill="#00E000"/>
<rect x="81" y="231" width="1" height="2" fill="#00E000"/>
<rect x="82" y="231" width="1" height="1" fill="#00E000"/>
<rect x="83" y="231" width="1" height="1" fill="#00E000"/>
<rect x="84" y="231" width="1" height="1" fill="#00E000"/>
<rect x="84" y="230" width="1" height="1" fill="#00E000"/>
<rect x="85" y="231" width="1" height="1" fill="#00E000"/>
<rect x="86" y="231" width="1" height="1" fill="#00E000"/>
<rect x="87" y="231" width="1" height="1" fill="#00E000"/>
<rect x="88" y="231" width="1" height="1" fill="#00E000"/>
<rect x="89" y="230" width="1" height="2" fill="#00E000"/>
<rect x="90" y="230" width="1" height="1" fill="#00E000"/>
<rect x="91" y="230" width="1" height="1" fill="#00E000"/>
<rect x="91" y="229" width="1" height="1" fill="#00E000"/>
<rect x="92" y="230" width="1" height="1" fill="#00E000"/>
<rect x="93" y="230" width="1" height="1" fill="#00E000"/>
<rect x="93" y="229" width="1" height="1" fill="#00E000"/>
<rect x="94" y="230" width="1" height="1" fill="#00E000"/>
<rect x="95" y="230" width="1" height="1" fill="#00E000"/>
<rect x="96" y="229" width="1" height="2" fill="#00E000"/>
<rect x="97" y="229" width="1" height="1" fill="#00E000"/>
<rect x="97" y="228" width="1" height="1" fill="#00E000"/>
<rect x="98" y="229" width="1" height="1" fill="#00E000"/>
<rect x="99" y="229" width="1" height="1" fill="#00E000"/>
<rect x="100" y="229" width="1" height="1" fill="#00E000"/>
<rect x="101" y="229" width="1" height="1" fill="#00E000"/>
<rect x="101" y="228" width="1" height="1" fill="#00E000"/>
<rect x="102" y="229" width="1" height="1" fill="#00E000"/>
<rect x="103" y="228" width="1" height="2" fill="#00E000"/>
<rect x="104" y="228" width="1" height="1" fill="#00E000"/>
<rect x="104" y="227" width="1" height="1" fill="#00E000"/>
<rect x="105" y="228" width="1" height="1" fill="#00E000"/>
<rect x="106" y="228" width="1" height="1" fill="#00E000"/>
<rect x="107" y="228" width="1" height="1" fill="#00E000"/>
<rect x="108" y="228" width="1" height="1" fill="#00E000"/>
<rect x="109" y="228" width="1" height="1" fill="#00E000"/>
<rect x="110" y="228" width="1" height="1" fill="#00E000"/>
<rect x="111" y="227" width="1" height="2" fill="#00E000"/>
<rect x="112" y="227" width="1" height="1" fill="#00E000"/>
<rect x="113" y="227" width="1" height="1" fill="#00E000"/>
<rect x="114" y="227" width="1" height="1" fill="#00E000"/>
<rect x="115" y="227" width="1" height="1" fill="#00E000"/>
<rect x="116" y="227" width="1" height="1" fill="#00E000"/>
<rect x="117" y="227" width="1" height="1" fill="#00E000"/>
<rect x="117" y="226" width="1" height="1" fill="#00E000"/>
<rect x="118" y="227" width="1" height="1" fill="#00E000"/>
<rect x="119" y="227" width="1" height="1" fill="#00E000"/>
<rect x="119" y="226" width="1" height="1" fill="#00E000"/>
<rect x="120" y="226" width="1" height="2" fill="#00E000"/>
<rect x="121" y="226" width="1" height="1" fill="#00E000"/>
<rect x="122" y="226" width="1" height="1" fill="#00E000"/>
<rect x="123" y="226" width="1" height="1" fill="#00E000"/>
<rect x="123" y="225" width="1" height="1" fill="#00E000"/>
<rect x="124" y="226" width="1" height="1" fill="#00E000"/>
<rect x="125" y="226" width="1" height="1" fill="#00E000"/>
<rect x="126" y="226" width="1" height="1" fill="#00E000"/>
<rect x="127" y="226" width="1" height="1" fill="#00E000"/>
<rect x="127" y="225" width="1" height="1" fill="#00E000"/>
<rect x="128" y="226" width="1" height="1" fill="#00E000"/>
<rect x="129" y="225" width="1" height="2" fill="#00E000"/>
<rect x="130" y="225" width="1" height="1" fill="#00E000"/>
<rect x="131" y="225" width="1" height="1" fill="#00E000"/>
<rect x="131" y="224" width="1" height="1" fill="#00E000"/>
<rect x="132" y="225" width="1" height="1" fill="#00E000"/>
<rect x="133" y="225" width="1" height="1" fill="#00E000"/>
<rect x="133" y="224" width="1" height="1" fill="#00E000"/>
<rect x="134" y="225" width="1" height="1" fill="#00E000"/>
<rect x="135" y="225" width="1" height="1" fill="#00E000"/>
<rect x="136" y="225" width="1" height="1" fill="#00E000"/>
<rect x="137" y="224" width="1" height="2" fill="#00E000"/>
<rect x="138" y="224" width="1" height="1" fill="#00E000"/>
<rect x="139" y="224" width="1" height="1" fill="#00E000"/>
<rect x="140" y="224" width="1" height="1" fill="#00E000"/>
<rect x="140" y="223" width="1" height="1" fill="#00E000"/>
<rect x="141" y="224" width="1" height="1" fill="#00E000"/>
<rect x="142" y="224" width="1" height="1" fill="#00E000"/>
<rect x="143" y="224" width="1" height="1" fill="#00E000"/>
<rect x="144" y="224" width="1" height="1" fill="#00E000"/>
<rect x="144" y="223" width="1" height="1" fill="#00E000"/>
<rect x="145" y="224" width="1" height="1" fill="#00E000"/>
<rect x="145" y="223" width="1" height="1" fill="#00E000"/>
<rect x="146" y="223" width="1" height="2" fill="#00E000"/>
<rect x="147" y="223" width="1" height="1" fill="#00E000"/>
<rect x="147" y="222" width="1" height="1" fill="#00E000"/>
<rect x="148" y="223" width="1" height="1" fill="#00E000"/>
<rect x="149" y="223" width="1" height="1" fill="#00E000"/>
<rect x="149" y="222" width="1" height="1" fill="#00E000"/>
<rect x="150" y="223" width="1" height="1" fill="#00E000"/>
<rect x="151" y="223" width="1" height="1" fill="#00E000"/>
<rect x="152" y="223" width="1" height="1" fill="#00E000"/>
<rect x="153" y="223" width="1" height="1" fill="#00E000"/>
<rect x="153" y="222" width="1" height="1" fill="#00E000"/>
<rect x="154" y="223" width="1" height="1" fill="#00E000"/>
<rect x="155" y="222" width="1" height="2" fill="#00E000"/>
<rect x="156" y="222" width="1" height="1" fill="#00E000"/>
<rect x="157" y="222" width="1" height="1" fill="#00E000"/>
<rect x="157" y="221" width="1" height="1" fill="#00E000"/>
<rect x="158" y="222" width="1" height="1" fill="#00E000"/>
<rect x="158" y="221" width="1" height="1" fill="#00E000"/>
<rect x="159" y="222" width="1" height="1" fill="#00E000"/>
<rect x="159" y="221" width="1" height="1" fill="#00E000"/>
<rect x="160" y="222" width="1" height="1" fill="#00E000"/>
<rect x="161" y="222" width="1" height="1" fill="#00E000"/>
<rect x="162" y="222" width="1" height="1" fill="#00E000"/>
<rect x="163" y="221" width="1" height="2" fill="#00E000"/>
<rect x="164" y="221" width="1" height="1" fill="#00E000"/>
<rect x="165" y="221" width="1" height="1" fill="#00E000"/>
<rect x="166" y="221" width="1" height="1" fill="#00E000"/>
<rect x="167" y="221" width="1" height="1" fill="#00E000"/>
<rect x="168" y="221" width="1" height="1" fill="#00E000"/>
<rect x="169" y="221" width="1" height="1" fill="#00E000"/>
<rect x="170" y="221" width="1" height="1" fill="#00E000"/>
<rect x="171" y="221" width="1" height="1" fill="#00E000"/>
<rect x="171" y="220" width="1" height="1" fill="#00E000"/>
<rect x="172" y="220" width="1" height="2" fill="#00E000"/>
<rect x="173" y="220" width="1" height="1" fill="#00E000"/>
<rect x="174" y="220" width="1" height="1" fill="#00E000"/>
<rect x="175" y="220" width="1" height="1" fill="#00E000"/>
<rect x="176" y="220" width="1" height="1" fill="#00E000"/>
<rect x="177" y="220" width="1" height="1" fill="#00E000"/>
<rect x="178" y="220" width="1" height="1" fill="#00E000"/>
<rect x="179" y="220" width="1" height="1" fill="#00E000"/>
<rect x="179" y="219" width="1" height="1" fill="#00E000"/>
<rect x="180" y="220" width="1" height="1" fill="#00E000"/>
<rect x="180" y="219" width="1" height="1" fill="#00E000"/>
<rect x="181" y="219" width="1" height="2" fill="#00E000"/>
<rect x="182" y="219" width="1" height="1" fill="#00E000"/>
<rect x="182" y="218" width="1" height="1" fill="#00E000"/>
<rect x="183" y="219" width="1" height="1" fill="#00E000"/>
<rect x="183" y="218" width="1" height="1" fill="#00E000"/>
<rect x="184" y="219" width="1" height="1" fill="#00E000"/>
<rect x="185" y="219" width="1" height="1" fill="#00E000"/>
<rect x="186" y="219" width="1" height="1" fill="#00E000"/>
<rect x="187" y="219" width="1" height="1" fill="#00E000"/>
<rect x="188" y="219" width="1" height="1" fill="#00E000"/>
<rect x="188" y="218" width="1" height="1" fill="#00E000"/>
<rect x="189" y="218" width="1" height="2" fill="#00E000"/>
<rect x="190" y="218" width="1" height="1" fill="#00E000"/>
<rect x="191" y="218" width="1" height="1" fill="#00E000"/>
<rect x="192" y="218" width="1" height="1" fill="#00E000"/>
<rect x="193" y="218" width="1" height="1" fill="#00E000"/>
<rect x="194" y="218" width="1" height="1" fill="#00E000"/>
<rect x="195" y="218" width="1" height="1" fill="#00E000"/>
<rect x="196" y="218" width="1" height="1" fill="#00E000"/>
<rect x="197" y="218" width="1" height="1" fill="#00E000"/>
<rect x="198" y="217" width="1" height="2" fill="#00E000"/>
<rect x="199" y="217" width="1" height="1" fill="#00E000"/>
<rect x="200" y="217" width="1" height="1" fill="#00E000"/>
<rect x="201" y="217" width="1" height="1" fill="#00E000"/>
<rect x="202" y="217" width="1" height="1" fill="#00E000"/>
<rect x="203" y="217" width="1" height="1" fill="#00E000"/>
<rect x="204" y="217" width="1" height="1" fill="#00E000"/>
<rect x="205" y="217" width="1" height="1" fill="#00E000"/>
<rect x="206" y="217" width="1" height="1" fill="#00E000"/>
<rect x="207" y="216" width="1" height="2" fill="#00E000"/>
<rect x="208" y="216" width="1" height="1" fill="#00E000"/>
<rect x="209" y="216" width="1" height="1" fill="#00E000"/>
<rect x="210" y="216" width="1" height="1" fill="#00E000"/>
<rect x="211" y="216" width="1" height="1" fill="#00E000"/>
<rect x="212" y="216" width="1" height="1" fill="#00E000"/>
<rect x="213" y="216" width="1" height="1" fill="#00E000"/>
<rect x="214" y="216" width="1" height="1" fill="#00E000"/>
<rect x="215" y="216" width="1" height="1" fill="#00E000"/>
<rect x="216" y="215" width="1" height="2" fill="#00E000"/>
<rect x="217" y="215" width="1" height="1" fill="#00E000"/>
<rect x="218" y="215" width="1" height="1" fill="#00E000"/>
<rect x="219" y="215" width="1" height="1" fill="#00E000"/>
<rect x="220" y="215" width="1" height="1" fill="#00E000"/>
<rect x="221" y="215" width="1" height="1" fill="#00E000"/>
<rect x="222" y="215" width="1" height="1" fill="#00E000"/>
<rect x="223" y="215" width="1" height="1" fill="#00E000"/>
<rect x="224" y="215" width="1" height="1" fill="#00E000"/>
<rect x="224" y="214" width="1" height="1" fill="#00E000"/>
<rect x="225" y="215" width="1" height="1" fill="#00E000"/>
<rect x="226" y="214" width="1" height="2" fill="#00E000"/>
<rect x="227" y="214" width="1" height="1" fill="#00E000"/>
<rect x="227" y="213" width="1" height="1" fill="#00E000"/>
<rect x="228" y="214" width="1" height="1" fill="#00E000"/>
<rect x="229" y="214" width="1" height="1" fill="#00E000"/>
<rect x="230" y="214" width="1" height="1" fill="#00E000"/>
<rect x="230" y="213" width="1" height="1" fill="#00E000"/>
<rect x="231" y="214" width="1" height="1" fill="#00E000"/>
<rect x="232" y="214" width="1" height="1" fill="#00E000"/>
<rect x="233" y="214" width="1" height="1" fill="#00E000"/>
<rect x="234" y="214" width="1" height="1" fill="#00E000"/>
<rect x="235" y="214" width="1" height="1" fill="#00E000"/>
<rect x="235" y="213" width="1" height="1" fill="#00E000"/>
<rect x="236" y="214" width="1" height="1" fill="#00E000"/>
<rect x="236" y="213" width="1" height="1" fill="#00E000"/>
<rect x="237" y="214" width="1" height="1" fill="#00E000"/>
<rect x="238" y="213" width="1" height="2" fill="#00E000"/>
<rect x="239" y="213" width="1" height="1" fill="#00E000"/>
<rect x="240" y="213" width="1" height="1" fill="#00E000"/>
<rect x="241" y="213" width="1" height="1" fill="#00E000"/>
<rect x="242" y="213" width="1" height="1" fill="#00E000"/>
<rect x="243" y="213" width="1" height="1" fill="#00E000"/>
<rect x="243" y="212" width="1" height="1" fill="#00E000"/>
<rect x="244" y="213" width="1" height="1" fill="#00E000"/>
<rect x="245" y="213" width="1" height="1" fill="#00E000"/>
<rect x="245" y="212" width="1" height="1" fill="#00E000"/>
<rect x="246" y="213" width="1" height="1" fill="#00E000"/>
<rect x="247" y="213" width="1" height="1" fill="#00E000"/>
<rect x="248" y="213" width="1" height="1" fill="#00E000"/>
<rect x="249" y="212" width="1" height="2" fill="#00E000"/>
<rect x="250" y="212" width="1" height="1" fill="#00E000"/>
<rect x="250" y="211" width="1" height="1" fill="#00E000"/>
<rect x="251" y="212" width="1" height="1" fill="#00E000"/>
<rect x="252" y="212" width="1" height="1" fill="#00E000"/>
<rect x="252" y="211" width="1" height="1" fill="#00E000"/>
<rect x="253" y="212" width="1" height="1" fill="#00E000"/>
<rect x="254" y="212" width="1" height="1" fill="#00E000"/>
<rect x="255" y="212" width="1" height="1" fill="#00E000"/>
<rect x="256" y="212" width="1" height="1" fill="#00E000"/>
<rect x="256" y="211" width="1" height="1" fill="#00E000"/>
<rect x="257" y="212" width="1" height="1" fill="#00E000"/>
<rect x="258" y="212" width="1" height="1" fill="#00E000"/>
<rect x="258" y="211" width="1" height="1" fill="#00E000"/>
<rect x="259" y="212" width="1" height="1" fill="#00E000"/>
<rect x="260" y="212" width="1" height="1" fill="#00E000"/>
<rect x="261" y="211" width="1" height="2" fill="#00E000"/>
<rect x="262" y="211" width="1" height="1" fill="#00E000"/>
<rect x="263" y="211" width="1" height="1" fill="#00E000"/>
<rect x="263" y="210" width="1" height="1" fill="#00E000"/>
<rect x="264" y="211" width="1" height="1" fill="#00E000"/>
<rect x="264" y="210" width="1" height="1" fill="#00E000"/>
<rect x="265" y="211" width="1" height="1" fill="#00E000"/>
<rect x="265" y="210" width="1" height="1" fill="#00E000"/>
<rect x="266" y="211" width="1" height="1" fill="#00E000"/>
<rect x="267" y="211" width="1" height="1" fill="#00E000"/>
<rect x="267" y="210" width="1" height="1" fill="#00E000"/>
<rect x="268" y="211" width="1" height="1" fill="#00E000"/>
<rect x="269" y="211" width="1" height="1" fill="#00E000"/>
<rect x="270" y="211" width="1" height="1" fill="#00E000"/>
<rect x="271" y="211" width="1" height="1" fill="#00E000"/>
<rect x="272" y="210" width="1" height="2" fill="#00E000"/>
<rect x="273" y="210" width="1" height="1" fill="#00E000"/>
<rect x="274" y="210" width="1" height="1" fill="#00E000"/>
<rect x="275" y="210" width="1" height="1" fill="#00E000"/>
<rect x="276" y="210" width="1" height="1" fill="#00E000"/>
<rect x="277" y="210" width="1" height="1" fill="#00E000"/>
<rect x="277" y="209" width="1" height="1" fill="#00E000"/>
<rect x="278" y="210" width="1" height="1" fill="#00E000"/>
<rect x="279" y="210" width="1" height="1" fill="#00E000"/>
<rect x="280" y="210" width="1" height="1" fill="#00E000"/>
<rect x="281" y="210" width="1" height="1" fill="#00E000"/>
<rect x="282" y="210" width="1" height="1" fill="#00E000"/>
<rect x="282" y="209" width="1" height="1" fill="#00E000"/>
<rect x="283" y="209" width="1" height="2" fill="#00E000"/>
<rect x="284" y="209" width="1" height="1" fill="#00E000"/>
<rect x="285" y="209" width="1" height="1" fill="#00E000"/>
<rect x="286" y="209" width="1" height="1" fill="#00E000"/>
<rect x="287" y="209" width="1" height="1" fill="#00E000"/>
<rect x="288" y="209" width="1" height="1" fill="#00E000"/>
<rect x="289" y="209" width="1" height="1" fill="#00E000"/>
<rect x="290" y="209" width="1" height="1" fill="#00E000"/>
<rect x="291" y="209" width="1" height="1" fill="#00E000"/>
<rect x="292" y="209" width="1" height="1" fill="#00E000"/>
<rect x="293" y="209" width="1" height="1" fill="#00E000"/>
<rect x="294" y="209" width="1" height="1" fill="#00E000"/>
<rect x="295" y="208" width="1" height="2" fill="#00E000"/>
<rect x="296" y="208" width="1" height="1" fill="#00E000"/>
<rect x="297" y="208" width="1" height="1" fill="#00E000"/>
<rect x="298" y="208" width="1" height="1" fill="#00E000"/>
<rect x="299" y="208" width="1" height="1" fill="#00E000"/>
<rect x="300" y="208" width="1" height="1" fill="#00E000"/>
<rect x="301" y="208" width="1" height="1" fill="#00E000"/>
<rect x="302" y="208" width="1" height="1" fill="#00E000"/>
<rect x="303" y="208" width="1" height="1" fill="#00E000"/>
<rect x="304" y="208" width="1" height="1" fill="#00E000"/>
<rect x="305" y="208" width="1" height="1" fill="#00E000"/>
<rect x="306" y="208" width="1" height="1" fill="#00E000"/>
<rect x="307" y="207" width="1" height="2" fill="#00E000"/>
<rect x="308" y="207" width="1" height="1" fill="#00E000"/>
<rect x="309" y="207" width="1" height="1" fill="#00E000"/>
<rect x="310" y="207" width="1" height="1" fill="#00E000"/>
<rect x="311" y="207" width="1" height="1" fill="#00E000"/>
<rect x="312" y="207" width="1" height="1" fill="#00E000"/>
<rect x="312" y="206" width="1" height="1" fill="#00E000"/>
<rect x="313" y="207" width="1" height="1" fill="#00E000"/>
<rect x="314" y="207" width="1" height="1" fill="#00E000"/>
<rect x="315" y="207" width="1" height="1" fill="#00E000"/>
<rect x="316" y="207" width="1" height="1" fill="#00E000"/>
<rect x="317" y="207" width="1" height="1" fill="#00E000"/>
<rect x="318" y="207" width="1" height="1" fill="#00E000"/>
<rect x="319" y="207" width="1" height="1" fill="#00E000"/>
<rect x="320" y="207" width="1" height="1" fill="#00E000"/>
<rect x="321" y="206" width="1" height="2" fill="#00E000"/>
<rect x="322" y="206" width="1" height="1" fill="#00E000"/>
<rect x="323" y="206" width="1" height="1" fill="#00E000"/>
<rect x="324" y="206" width="1" height="1" fill="#00E000"/>
<rect x="324" y="205" width="1" height="1" fill="#00E000"/>
<rect x="325" y="206" width="1" height="1" fill="#00E000"/>
<rect x="325" y="205" width="1" height="1" fill="#00E000"/>
<rect x="326" y="206" width="1" height="1" fill="#00E000"/>
<rect x="327" y="206" width="1" height="1" fill="#00E000"/>
<rect x="328" y="206" width="1" height="1" fill="#00E000"/>
<rect x="329" y="206" width="1" height="1" fill="#00E000"/>
<rect x="330" y="206" width="1" height="1" fill="#00E000"/>
<rect x="331" y="206" width="1" height="1" fill="#00E000"/>
<rect x="332" y="206" width="1" height="1" fill="#00E000"/>
<rect x="333" y="206" width="1" height="1" fill="#00E000"/>
<rect x="334" y="205" width="1" height="2" fill="#00E000"/>
<rect x="335" y="205" width="1" height="1" fill="#00E000"/>
<rect x="336" y="205" width="1" height="1" fill="#00E000"/>
<rect x="337" y="205" width="1" height="1" fill="#00E000"/>
<rect x="338" y="205" width="1" height="1" fill="#00E000"/>
<rect x="339" y="205" width="1" height="1" fill="#00E000"/>
<rect x="340" y="205" width="1" height="1" fill="#00E000"/>
<rect x="341" y="205" width="1" height="1" fill="#00E000"/>
<rect x="342" y="205" width="1" height="1" fill="#00E000"/>
<rect x="343" y="205" width="1" height="1" fill="#00E000"/>
<rect x="344" y="205" width="1" height="1" fill="#00E000"/>
<rect x="344" y="204" width="1" height="1" fill="#00E000"/>
<rect x="345" y="205" width="1" height="1" fill="#00E000"/>
<rect x="346" y="205" width="1" height="1" fill="#00E000"/>
<rect x="347" y="204" width="1" height="2" fill="#00E000"/>
<rect x="348" y="204" width="1" height="1" fill="#00E000"/>
<rect x="349" y="204" width="1" height="1" fill="#00E000"/>
<rect x="350" y="204" width="1" height="1" fill="#00E000"/>
<rect x="351" y="204" width="1" height="1" fill="#00E000"/>
<rect x="351" y="203" width="1" height="1" fill="#00E000"/>
<rect x="352" y="204" width="1" height="1" fill="#00E000"/>
<rect x="352" y="203" width="1" height="1" fill="#00E000"/>
<rect x="353" y="204" width="1" height="1" fill="#00E000"/>
<rect x="354" y="204" width="1" height="1" fill="#00E000"/>
<rect x="355" y="204" width="1" height="1" fill="#00E000"/>
<rect x="356" y="204" width="1" height="1" fill="#00E000"/>
<rect x="357" y="204" width="1" height="1" fill="#00E000"/>
<rect x="358" y="204" width="1" height="1" fill="#00E000"/>
<rect x="359" y="204" width="1" height="1" fill="#00E000"/>
<rect x="359" y="203" width="1" height="1" fill="#00E000"/>
<rect x="360" y="204" width="1" height="1" fill="#00E000"/>
<rect x="361" y="203" width="1" height="2" fill="#00E000"/>
<rect x="362" y="203" width="1" height="1" fill="#00E000"/>
<rect x="363" y="203" width="1" height="1" fill="#00E000"/>
<rect x="363" y="202" width="1" height="1" fill="#00E000"/>
<rect x="364" y="203" width="1" height="1" fill="#00E000"/>
<rect x="365" y="203" width="1" height="1" fill="#00E000"/>
<rect x="366" y="203" width="1" height="1" fill="#00E000"/>
<rect x="367" y="203" width="1" height="1" fill="#00E000"/>
<rect x="367" y="202" width="1" height="1" fill="#00E000"/>
<rect x="368" y="203" width="1" height="1" fill="#00E000"/>
<rect x="369" y="203" width="1" height="1" fill="#00E000"/>
<rect x="370" y="203" width="1" height="1" fill="#00E000"/>
<rect x="371" y="203" width="1" height="1" fill="#00E000"/>
<rect x="371" y="202" width="1" height="1" fill="#00E000"/>
<rect x="372" y="203" width="1" height="1" fill="#00E000"/>
<rect x="373" y="203" width="1" height="1" fill="#00E000"/>
<rect x="373" y="202" width="1" height="1" fill="#00E000"/>
<rect x="374" y="202" width="1" height="2" fill="#00E000"/>
<rect x="375" y="202" width="1" height="1" fill="#00E000"/>
<rect x="376" y="202" width="1" height="1" fill="#00E000"/>
<rect x="377" y="202" width="1" height="1" fill="#00E000"/>
<rect x="378" y="202" width="1" height="1" fill="#00E000"/>
<rect x="379" y="202" width="1" height="1" fill="#00E000"/>
<rect x="380" y="202" width="1" height="1" fill="#00E000"/>
<rect x="380" y="201" width="1" height="1" fill="#00E000"/>
<rect x="381" y="202" width="1" height="1" fill="#00E000"/>
<rect x="382" y="202" width="1" height="1" fill="#00E000"/>
<rect x="383" y="202" width="1" height="1" fill="#00E000"/>
<rect x="384" y="202" width="1" height="1" fill="#00E000"/>
<rect x="385" y="202" width="1" height="1" fill="#00E000"/>
<rect x="385" y="201" width="1" height="1" fill="#00E000"/>
<rect x="386" y="202" width="1" height="1" fill="#00E000"/>
<rect x="386" y="201" width="1" height="1" fill="#00E000"/>
<rect x="387" y="201" width="1" height="2" fill="#00E000"/>
<rect x="388" y="201" width="1" height="1" fill="#00E000"/>
<rect x="389" y="201" width="1" height="1" fill="#00E000"/>
<rect x="390" y="201" width="1" height="1" fill="#00E000"/>
<rect x="391" y="201" width="1" height="1" fill="#00E000"/>
<rect x="392" y="201" width="1" height="1" fill="#00E000"/>
<rect x="393" y="201" width="1" height="1" fill="#00E000"/>
<rect x="394" y="201" width="1" height="1" fill="#00E000"/>
<rect x="395" y="201" width="1" height="1" fill="#00E000"/>
<rect x="396" y="201" width="1" height="1" fill="#00E000"/>
<rect x="397" y="201" width="1" height="1" fill="#00E000"/>
<rect x="397" y="200" width="1" height="1" fill="#00E000"/>
<rect x="398" y="201" width="1" height="1" fill="#00E000"/>
<rect x="399" y="201" width="1" height="1" fill="#00E000"/>
<rect x="400" y="201" width="1" height="1" fill="#00E000"/>
<rect x="401" y="200" width="1" height="2" fill="#00E000"/>
<rect x="402" y="200" width="1" height="1" fill="#00E000"/>
<rect x="402" y="199" width="1" height="1" fill="#00E000"/>
<rect x="403" y="200" width="1" height="1" fill="#00E000"/>
<rect x="404" y="200" width="1" height="1" fill="#00E000"/>
<rect x="405" y="200" width="1" height="1" fill="#00E000"/>
<rect x="406" y="200" width="1" height="1" fill="#00E000"/>
<rect x="407" y="200" width="1" height="1" fill="#00E000"/>
<rect x="407" y="199" width="1" height="1" fill="#00E000"/>
<rect x="408" y="200" width="1" height="1" fill="#00E000"/>
<rect x="409" y="200" width="1" height="1" fill="#00E000"/>
<rect x="409" y="199" width="1" height="1" fill="#00E000"/>
<rect x="410" y="200" width="1" height="1" fill="#00E000"/>
<rect x="411" y="200" width="1" height="1" fill="#00E000"/>
<rect x="412" y="200" width="1" height="1" fill="#00E000"/>
<rect x="413" y="200" width="1" height="1" fill="#00E000"/>
<rect x="414" y="199" width="1" height="2" fill="#00E000"/>
<rect x="415" y="199" width="1" height="1" fill="#00E000"/>
<rect x="416" y="199" width="1" height="1" fill="#00E000"/>
<rect x="417" y="199" width="1" height="1" fill="#00E000"/>
<rect x="418" y="199" width="1" height="1" fill="#00E000"/>
<rect x="419" y="199" width="1" height="1" fill="#00E000"/>
<rect x="420" y="199" width="1" height="1" fill="#00E000"/>
<rect x="421" y="199" width="1" height="1" fill="#00E000"/>
<rect x="422" y="199" width="1" height="1" fill="#00E000"/>
<rect x="422" y="198" width="1" height="1" fill="#00E000"/>
<rect x="423" y="199" width="1" height="1" fill="#00E000"/>
<rect x="424" y="199" width="1" height="1" fill="#00E000"/>
<rect x="425" y="199" width="1" height="1" fill="#00E000"/>
<rect x="426" y="199" width="1" height="1" fill="#00E000"/>
<rect x="427" y="198" width="1" height="2" fill="#00E000"/>
<rect x="428" y="198" width="1" height="1" fill="#00E000"/>
<rect x="429" y="198" width="1" height="1" fill="#00E000"/>
<rect x="430" y="198" width="1" height="1" fill="#00E000"/>
<rect x="431" y="198" width="1" height="1" fill="#00E000"/>
<rect x="432" y="198" width="1" height="1" fill="#00E000"/>
<rect x="433" y="198" width="1" height="1" fill="#00E000"/>
<rect x="434" y="198" width="1" height="1" fill="#00E000"/>
<rect x="434" y="197" width="1" height="1" fill="#00E000"/>
<rect x="435" y="198" width="1" height="1" fill="#00E000"/>
<rect x="436" y="198" width="1" height="1" fill="#00E000"/>
<rect x="437" y="198" width="1" height="1" fill="#00E000"/>
<rect x="438" y="198" width="1" height="1" fill="#00E000"/>
<rect x="439" y="198" width="1" height="1" fill="#00E000"/>
<rect x="440" y="198" width="1" height="1" fill="#00E000"/>
<rect x="441" y="197" width="1" height="2" fill="#00E000"/>
<rect x="442" y="197" width="1" height="1" fill="#00E000"/>
<rect x="442" y="196" width="1" height="1" fill="#00E000"/>
<rect x="443" y="197" width="1" height="1" fill="#00E000"/>
<rect x="444" y="197" width="1" height="1" fill="#00E000"/>
<rect x="445" y="197" width="1" height="1" fill="#00E000"/>
<rect x="446" y="197" width="1" height="1" fill="#00E000"/>
<rect x="447" y="197" width="1" height="1" fill="#00E000"/>
<rect x="48" y="237" width="1" height="9" fill="#00E000"/>
<rect x="59" y="235" width="1" height="27" fill="#00E000"/>
<rect x="60" y="235" width="1" height="13" fill="#00E000"/>
<rect x="46" y="292" width="422" height="1" fill="#E4E1DA"/>
<rect x="45" y="293" width="1" height="137" fill="#E4E1DA"/>
<rect x="468" y="293" width="1" height="137" fill="#E4E1DA"/>
<rect x="46" y="293" width="422" height="137" fill="#000"/>
<rect x="48" y="295" width="418" height="134" fill="url(#bg1)"/>
<rect x="57" y="295" width="1" height="135" fill="#000090"/>
<rect x="66" y="295" width="1" height="135" fill="#000090"/>
<rect x="75" y="295" width="1" height="135" fill="#000090"/>
<rect x="85" y="295" width="1" height="135" fill="#000090"/>
<rect x="94" y="295" width="1" height="135" fill="#0000FF"/>
<rect x="103" y="295" width="1" height="135" fill="#000090"/>
<rect x="113" y="295" width="1" height="135" fill="#000090"/>
<rect x="122" y="295" width="1" height="135" fill="#000090"/>
<rect x="131" y="295" width="1" height="135" fill="#000090"/>
<rect x="140" y="295" width="1" height="135" fill="#0000FF"/>
<rect x="150" y="295" width="1" height="135" fill="#000090"/>
<rect x="159" y="295" width="1" height="135" fill="#000090"/>
<rect x="168" y="295" width="1" height="135" fill="#000090"/>
<rect x="178" y="295" width="1" height="135" fill="#000090"/>
<rect x="187" y="295" width="1" height="135" fill="#0000FF"/>
<rect x="196" y="295" width="1" height="135" fill="#000090"/>
<rect x="205" y="295" width="1" height="135" fill="#000090"/>
<rect x="215" y="295" width="1" height="135" fill="#000090"/>
<rect x="224" y="295" width="1" height="135" fill="#000090"/>
<rect x="233" y="295" width="1" height="135" fill="#0000FF"/>
<rect x="243" y="295" width="1" height="135" fill="#000090"/>
<rect x="252" y="295" width="1" height="135" fill="#000090"/>
<rect x="261" y="295" width="1" height="135" fill="#000090"/>
<rect x="270" y="295" width="1" height="135" fill="#000090"/>
<rect x="280" y="295" width="1" height="135" fill="#0000FF"/>
<rect x="289" y="295" width="1" height="135" fill="#000090"/>
<rect x="298" y="295" width="1" height="135" fill="#000090"/>
<rect x="308" y="295" width="1" height="135" fill="#000090"/>
<rect x="317" y="295" width="1" height="135" fill="#000090"/>
<rect x="326" y="295" width="1" height="135" fill="#0000FF"/>
<rect x="335" y="295" width="1" height="135" fill="#000090"/>
<rect x="345" y="295" width="1" height="135" fill="#000090"/>
<rect x="354" y="295" width="1" height="135" fill="#000090"/>
<rect x="363" y="295" width="1" height="135" fill="#000090"/>
<rect x="373" y="295" width="1" height="135" fill="#0000FF"/>
<rect x="382" y="295" width="1" height="135" fill="#000090"/>
<rect x="391" y="295" width="1" height="135" fill="#000090"/>
<rect x="401" y="295" width="1" height="135" fill="#000090"/>
<rect x="410" y="295" width="1" height="135" fill="#000090"/>
<rect x="419" y="295" width="1" height="135" fill="#0000FF"/>
<rect x="428" y="295" width="1" height="135" fill="#000090"/>
<rect x="438" y="295" width="1" height="135" fill="#000090"/>
<rect x="447" y="295" width="1" height="135" fill="#000090"/>
<rect x="456" y="295" width="1" height="135" fill="#000090"/>
<rect x="46" y="428" width="420" height="1" fill="#0000FF"/>
<rect x="45" y="428" width="3" height="1" fill="#0000FF"/>
<rect x="48" y="415" width="418" height="1" fill="#000090"/>
<rect x="46" y="415" width="2" height="1" fill="#000090"/>
<rect x="46" y="402" width="420" height="1" fill="#0000FF"/>
<rect x="45" y="402" width="3" height="1" fill="#0000FF"/>
<rect x="48" y="389" width="418" height="1" fill="#000090"/>
<rect x="46" y="389" width="2" height="1" fill="#000090"/>
<rect x="46" y="375" width="420" height="1" fill="#0000FF"/>
<rect x="45" y="375" width="3" height="1" fill="#0000FF"/>
<rect x="48" y="362" width="418" height="1" fill="#000090"/>
<rect x="46" y="362" width="2" height="1" fill="#000090"/>
<rect x="46" y="349" width="420" height="1" fill="#0000FF"/>
<rect x="45" y="349" width="3" height="1" fill="#0000FF"/>
<rect x="48" y="335" width="418" height="1" fill="#000090"/>
<rect x="46" y="335" width="2" height="1" fill="#000090"/>
<rect x="46" y="322" width="420" height="1" fill="#0000FF"/>
<rect x="45" y="322" width="3" height="1" fill="#0000FF"/>
<rect x="48" y="309" width="418" height="1" fill="#000090"/>
<rect x="46" y="309" width="2" height="1" fill="#000090"/>
<rect x="46" y="295" width="420" height="1" fill="#0000FF"/>
<rect x="45" y="295" width="3" height="1" fill="#0000FF"/>
<rect x="57" y="429" width="1" height="1" fill="#000090"/>
<rect x="66" y="429" width="1" height="1" fill="#000090"/>
<rect x="75" y="429" width="1" height="1" fill="#000090"/>
<rect x="85" y="429" width="1" height="1" fill="#000090"/>
<rect x="94" y="429" width="1" height="1" fill="#0000FF"/>
<rect x="103" y="429" width="1" height="1" fill="#000090"/>
<rect x="113" y="429" width="1" height="1" fill="#000090"/>
<rect x="122" y="429" width="1" height="1" fill="#000090"/>
<rect x="131" y="429" width="1" height="1" fill="#000090"/>
<rect x="140" y="429" width="1" height="1" fill="#0000FF"/>
<rect x="150" y="429" width="1" height="1" fill="#000090"/>
<rect x="159" y="429" width="1" height="1" fill="#000090"/>
<rect x="168" y="429" width="1" height="1" fill="#000090"/>
<rect x="178" y="429" width="1" height="1" fill="#000090"/>
<rect x="187" y="429" width="1" height="1" fill="#0000FF"/>
<rect x="196" y="429" width="1" height="1" fill="#000090"/>
<rect x="205" y="429" width="1" height="1" fill="#000090"/>
<rect x="215" y="429" width="1" height="1" fill="#000090"/>
<rect x="224" y="429" width="1" height="1" fill="#000090"/>
<rect x="233" y="429" width="1" height="1" fill="#0000FF"/>
<rect x="243" y="429" width="1" height="1" fill="#000090"/>
<rect x="252" y="429" width="1" height="1" fill="#000090"/>
<rect x="261" y="429" width="1" height="1" fill="#000090"/>
<rect x="270" y="429" width="1" height="1" fill="#000090"/>
<rect x="280" y="429" width="1" height="1" fill="#0000FF"/>
<rect x="289" y="429" width="1" height="1" fill="#000090"/>
<rect x="298" y="429" width="1" height="1" fill="#000090"/>
<rect x="308" y="429" width="1" height="1" fill="#000090"/>
<rect x="317" y="429" width="1" height="1" fill="#000090"/>
<rect x="326" y="429" width="1" height="1" fill="#0000FF"/>
<rect x="335" y="429" width="1" height="1" fill="#000090"/>
<rect x="345" y="429" width="1" height="1" fill="#000090"/>
<rect x="354" y="429" width="1" height="1" fill="#000090"/>
<rect x="363" y="429" width="1" height="1" fill="#000090"/>
<rect x="373" y="429" width="1" height="1" fill="#0000FF"/>
<rect x="382" y="429" width="1" height="1" fill="#000090"/>
<rect x="391" y="429" width="1" height="1" fill="#000090"/>
<rect x="401" y="429" width="1" height="1" fill="#000090"/>
<rect x="410" y="429" width="1" height="1" fill="#000090"/>
<rect x="419" y="429" width="1" height="1" fill="#0000FF"/>
<rect x="428" y="429" width="1" height="1" fill="#000090"/>
<rect x="438" y="429" width="1" height="1" fill="#000090"/>
<rect x="447" y="429" width="1" height="1" fill="#000090"/>
<rect x="456" y="429" width="1" height="1" fill="#000090"/>
<rect x="448" y="295" width="1" height="134" fill="#E0E0E0"/>
<rect x="53" y="415" width="1" height="14" fill="url(#gr)"/>
<rect x="65" y="349" width="1" height="80" fill="url(#gr)"/>
<rect x="65" y="349" width="1" height="80" fill="#C0FF40" fill-opacity="0.15"/>
<rect x="115" y="402" width="1" height="27" fill="url(#gr)"/>
<rect x="126" y="415" width="1" height="14" fill="url(#gr)"/>
<rect x="134" y="415" width="1" height="14" fill="url(#gr)"/>
<rect x="138" y="415" width="1" height="14" fill="url(#gr)"/>
<rect x="153" y="415" width="1" height="14" fill="url(#gr)"/>
<rect x="155" y="415" width="1" height="14" fill="url(#gr)"/>
<rect x="159" y="389" width="1" height="40" fill="url(#gr)"/>
<rect x="159" y="389" width="1" height="40" fill="#C0FF40" fill-opacity="0.15"/>
<rect x="179" y="349" width="1" height="80" fill="url(#gr)"/>
<rect x="180" y="375" width="1" height="54" fill="url(#gr)"/>
<rect x="181" y="349" width="1" height="80" fill="url(#gr)"/>
<rect x="182" y="349" width="1" height="80" fill="url(#gr)"/>
<rect x="183" y="349" width="1" height="80" fill="url(#gr)"/>
<rect x="184" y="349" width="1" height="80" fill="url(#gr)"/>
<rect x="185" y="335" width="1" height="94" fill="url(#gr)"/>
<rect x="186" y="349" width="1" height="80" fill="url(#gr)"/>
<rect x="186" y="349" width="1" height="80" fill="#C0FF40" fill-opacity="0.15"/>
<rect x="187" y="349" width="1" height="80" fill="url(#gr)"/>
<rect x="188" y="335" width="1" height="94" fill="url(#gr)"/>
<rect x="188" y="335" width="1" height="94" fill="#C0FF40" fill-opacity="0.15"/>
<rect x="189" y="309" width="1" height="120" fill="url(#gr)"/>
<rect x="190" y="322" width="1" height="107" fill="url(#gr)"/>
<rect x="191" y="335" width="1" height="94" fill="url(#gr)"/>
<rect x="191" y="335" width="1" height="94" fill="#C0FF40" fill-opacity="0.15"/>
<rect x="192" y="335" width="1" height="94" fill="url(#gr)"/>
<rect x="193" y="335" width="1" height="94" fill="url(#gr)"/>
<rect x="194" y="335" width="1" height="94" fill="url(#gr)"/>
<rect x="195" y="349" width="1" height="80" fill="url(#gr)"/>
<rect x="196" y="349" width="1" height="80" fill="url(#gr)"/>
<rect x="197" y="349" width="1" height="80" fill="url(#gr)"/>
<rect x="198" y="349" width="1" height="80" fill="url(#gr)"/>
<rect x="199" y="362" width="1" height="67" fill="url(#gr)"/>
<rect x="200" y="322" width="1" height="107" fill="url(#gr)"/>
<rect x="201" y="322" width="1" height="107" fill="url(#gr)"/>
<rect x="202" y="349" width="1" height="80" fill="url(#gr)"/>
<rect x="202" y="349" width="1" height="80" fill="#C0FF40" fill-opacity="0.15"/>
<rect x="203" y="335" width="1" height="94" fill="url(#gr)"/>
<rect x="204" y="349" width="1" height="80" fill="url(#gr)"/>
<rect x="205" y="349" width="1" height="80" fill="url(#gr)"/>
<rect x="206" y="349" width="1" height="80" fill="url(#gr)"/>
<rect x="207" y="362" width="1" height="67" fill="url(#gr)"/>
<rect x="207" y="362" width="1" height="67" fill="#C0FF40" fill-opacity="0.15"/>
<rect x="208" y="349" width="1" height="80" fill="url(#gr)"/>
<rect x="208" y="349" width="1" height="80" fill="#C0FF40" fill-opacity="0.15"/>
<rect x="209" y="362" width="1" height="67" fill="url(#gr)"/>
<rect x="210" y="362" width="1" height="67" fill="url(#gr)"/>
<rect x="211" y="349" width="1" height="80" fill="url(#gr)"/>
<rect x="212" y="362" width="1" height="67" fill="url(#gr)"/>
<rect x="213" y="362" width="1" height="67" fill="url(#gr)"/>
<rect x="214" y="349" width="1" height="80" fill="url(#gr)"/>
<rect x="215" y="362" width="1" height="67" fill="url(#gr)"/>
<rect x="216" y="375" width="1" height="54" fill="url(#gr)"/>
<rect x="217" y="375" width="1" height="54" fill="url(#gr)"/>
<rect x="218" y="375" width="1" height="54" fill="url(#gr)"/>
<rect x="219" y="389" width="1" height="40" fill="url(#gr)"/>
<rect x="219" y="389" width="1" height="40" fill="#C0FF40" fill-opacity="0.15"/>
<rect x="220" y="389" width="1" height="40" fill="url(#gr)"/>
<rect x="221" y="402" width="1" height="27" fill="url(#gr)"/>
<rect x="221" y="402" width="1" height="27" fill="#C0FF40" fill-opacity="0.15"/>
<rect x="222" y="402" width="1" height="27" fill="url(#gr)"/>
<rect x="223" y="402" width="1" height="27" fill="url(#gr)"/>
<rect x="224" y="402" width="1" height="27" fill="url(#gr)"/>
<rect x="225" y="402" width="1" height="27" fill="url(#gr)"/>
<rect x="226" y="415" width="1" height="14" fill="url(#gr)"/>
<rect x="227" y="402" width="1" height="27" fill="url(#gr)"/>
<rect x="228" y="415" width="1" height="14" fill="url(#gr)"/>
<rect x="228" y="415" width="1" height="14" fill="#C0FF40" fill-opacity="0.15"/>
<rect x="229" y="402" width="1" height="27" fill="url(#gr)"/>
<rect x="230" y="389" width="1" height="40" fill="url(#gr)"/>
<rect x="230" y="389" width="1" height="40" fill="#C0FF40" fill-opacity="0.15"/>
<rect x="231" y="415" width="1" height="14" fill="url(#gr)"/>
<rect x="232" y="415" width="1" height="14" fill="url(#gr)"/>
<rect x="239" y="389" width="1" height="40" fill="url(#gr)"/>
<rect x="251" y="415" width="1" height="14" fill="url(#gr)"/>
<rect x="267" y="415" width="1" height="14" fill="url(#gr)"/>
<rect x="268" y="415" width="1" height="14" fill="url(#gr)"/>
<rect x="268" y="415" width="1" height="14" fill="#C0FF40" fill-opacity="0.15"/>
<rect x="306" y="402" width="1" height="27" fill="url(#gr)"/>
<rect x="315" y="415" width="1" height="14" fill="url(#gr)"/>
<rect x="315" y="415" width="1" height="14" fill="#C0FF40" fill-opacity="0.15"/>
<rect x="321" y="402" width="1" height="27" fill="url(#gr)"/>
<rect x="321" y="402" width="1" height="27" fill="#C0FF40" fill-opacity="0.15"/>
<rect x="339" y="415" width="1" height="14" fill="url(#gr)"/>
<rect x="339" y="415" width="1" height="14" fill="#C0FF40" fill-opacity="0.15"/>
<rect x="349" y="389" width="1" height="40" fill="url(#gr)"/>
<rect x="357" y="415" width="1" height="14" fill="url(#gr)"/>
<rect x="370" y="415" width="1" height="14" fill="url(#gr)"/>
<rect x="378" y="402" width="1" height="27" fill="url(#gr)"/>
<rect x="386" y="415" width="1" height="14" fill="url(#gr)"/>
<rect x="401" y="402" width="1" height="27" fill="url(#gr)"/>
<rect x="401" y="402" width="1" height="27" fill="#C0FF40" fill-opacity="0.15"/>
<rect x="402" y="415" width="1" height="14" fill="url(#gr)"/>
<rect x="402" y="415" width="1" height="14" fill="#C0FF40" fill-opacity="0.15"/>
<rect x="404" y="415" width="1" height="14" fill="url(#gr)"/>
<rect x="404" y="415" width="1" height="14" fill="#C0FF40" fill-opacity="0.15"/>
<rect x="406" y="402" width="1" height="27" fill="url(#gr)"/>
<rect x="418" y="415" width="1" height="14" fill="url(#gr)"/>
<rect x="419" y="402" width="1" height="27" fill="url(#gr)"/>
<rect x="438" y="402" width="1" height="27" fill="url(#gr)"/>
<rect x="48" y="365" width="1" height="2" fill="#FF00FF"/>
<rect x="49" y="366" width="1" height="7" fill="#FF00FF"/>
<rect x="50" y="371" width="1" height="2" fill="#FF00FF"/>
<rect x="51" y="369" width="1" height="3" fill="#FF00FF"/>
<rect x="52" y="369" width="1" height="2" fill="#FF00FF"/>
<rect x="53" y="369" width="1" height="2" fill="#FF00FF"/>
<rect x="54" y="367" width="1" height="4" fill="#FF00FF"/>
<rect x="55" y="366" width="1" height="5" fill="#FF00FF"/>
<rect x="56" y="369" width="1" height="3" fill="#FF00FF"/>
<rect x="57" y="371" width="1" height="2" fill="#FF00FF"/>
<rect x="58" y="370" width="1" height="4" fill="#FF00FF"/>
<rect x="59" y="373" width="1" height="6" fill="#FF00FF"/>
<rect x="60" y="370" width="1" height="9" fill="#FF00FF"/>
<rect x="61" y="369" width="1" height="2" fill="#FF00FF"/>
<rect x="62" y="369" width="1" height="3" fill="#FF00FF"/>
<rect x="63" y="369" width="1" height="2" fill="#FF00FF"/>
<rect x="64" y="370" width="1" height="1" fill="#FF00FF"/>
<rect x="65" y="370" width="1" height="3" fill="#FF00FF"/>
<rect x="66" y="369" width="1" height="5" fill="#FF00FF"/>
<rect x="67" y="368" width="1" height="2" fill="#FF00FF"/>
<rect x="68" y="367" width="1" height="4" fill="#FF00FF"/>
<rect x="69" y="367" width="1" height="6" fill="#FF00FF"/>
<rect x="70" y="369" width="1" height="3" fill="#FF00FF"/>
<rect x="71" y="369" width="1" height="4" fill="#FF00FF"/>
<rect x="72" y="370" width="1" height="3" fill="#FF00FF"/>
<rect x="73" y="370" width="1" height="3" fill="#FF00FF"/>
<rect x="74" y="369" width="1" height="3" fill="#FF00FF"/>
<rect x="75" y="369" width="1" height="3" fill="#FF00FF"/>
<rect x="76" y="368" width="1" height="4" fill="#FF00FF"/>
<rect x="77" y="368" width="1" height="4" fill="#FF00FF"/>
<rect x="78" y="371" width="1" height="1" fill="#FF00FF"/>
<rect x="79" y="371" width="1" height="2" fill="#FF00FF"/>
<rect x="80" y="368" width="1" height="4" fill="#FF00FF"/>
<rect x="81" y="368" width="1" height="3" fill="#FF00FF"/>
<rect x="82" y="370" width="1" height="2" fill="#FF00FF"/>
<rect x="83" y="367" width="1" height="5" fill="#FF00FF"/>
<rect x="84" y="367" width="1" height="4" fill="#FF00FF"/>
<rect x="85" y="369" width="1" height="2" fill="#FF00FF"/>
<rect x="86" y="367" width="1" height="4" fill="#FF00FF"/>
<rect x="87" y="367" width="1" height="2" fill="#FF00FF"/>
<rect x="88" y="367" width="1" height="2" fill="#FF00FF"/>
<rect x="89" y="367" width="1" height="4" fill="#FF00FF"/>
<rect x="90" y="370" width="1" height="2" fill="#FF00FF"/>
<rect x="91" y="368" width="1" height="5" fill="#FF00FF"/>
<rect x="92" y="368" width="1" height="4" fill="#FF00FF"/>
<rect x="93" y="368" width="1" height="4" fill="#FF00FF"/>
<rect x="94" y="368" width="1" height="2" fill="#FF00FF"/>
<rect x="95" y="368" width="1" height="3" fill="#FF00FF"/>
<rect x="96" y="370" width="1" height="1" fill="#FF00FF"/>
<rect x="97" y="370" width="1" height="3" fill="#FF00FF"/>
<rect x="98" y="366" width="1" height="7" fill="#FF00FF"/>
<rect x="99" y="366" width="1" height="6" fill="#FF00FF"/>
<rect x="100" y="370" width="1" height="3" fill="#FF00FF"/>
<rect x="101" y="370" width="1" height="2" fill="#FF00FF"/>
<rect x="102" y="369" width="1" height="3" fill="#FF00FF"/>
<rect x="103" y="367" width="1" height="3" fill="#FF00FF"/>
<rect x="104" y="368" width="1" height="4" fill="#FF00FF"/>
<rect x="105" y="370" width="1" height="2" fill="#FF00FF"/>
<rect x="106" y="369" width="1" height="2" fill="#FF00FF"/>
<rect x="107" y="368" width="1" height="3" fill="#FF00FF"/>
<rect x="108" y="368" width="1" height="4" fill="#FF00FF"/>
<rect x="109" y="370" width="1" height="1" fill="#FF00FF"/>
<rect x="110" y="370" width="1" height="3" fill="#FF00FF"/>
<rect x="111" y="370" width="1" height="4" fill="#FF00FF"/>
<rect x="112" y="368" width="1" height="3" fill="#FF00FF"/>
<rect x="113" y="368" width="1" height="2" fill="#FF00FF"/>
<rect x="114" y="369" width="1" height="3" fill="#FF00FF"/>
<rect x="115" y="369" width="1" height="3" fill="#FF00FF"/>
<rect x="116" y="369" width="1" height="2" fill="#FF00FF"/>
<rect x="117" y="367" width="1" height="4" fill="#FF00FF"/>
<rect x="118" y="368" width="1" height="3" fill="#FF00FF"/>
<rect x="119" y="370" width="1" height="2" fill="#FF00FF"/>
<rect x="120" y="370" width="1" height="2" fill="#FF00FF"/>
<rect x="121" y="370" width="1" height="3" fill="#FF00FF"/>
<rect x="122" y="371" width="1" height="2" fill="#FF00FF"/>
<rect x="123" y="367" width="1" height="6" fill="#FF00FF"/>
<rect x="124" y="366" width="1" height="7" fill="#FF00FF"/>
<rect x="125" y="370" width="1" height="4" fill="#FF00FF"/>
<rect x="126" y="369" width="1" height="2" fill="#FF00FF"/>
<rect x="127" y="369" width="1" height="3" fill="#FF00FF"/>
<rect x="128" y="367" width="1" height="5" fill="#FF00FF"/>
<rect x="129" y="367" width="1" height="4" fill="#FF00FF"/>
<rect x="130" y="370" width="1" height="1" fill="#FF00FF"/>
<rect x="131" y="370" width="1" height="2" fill="#FF00FF"/>
<rect x="132" y="369" width="1" height="3" fill="#FF00FF"/>
<rect x="133" y="369" width="1" height="4" fill="#FF00FF"/>
<rect x="134" y="369" width="1" height="4" fill="#FF00FF"/>
<rect x="135" y="367" width="1" height="4" fill="#FF00FF"/>
<rect x="136" y="366" width="1" height="8" fill="#FF00FF"/>
<rect x="137" y="370" width="1" height="4" fill="#FF00FF"/>
<rect x="138" y="370" width="1" height="1" fill="#FF00FF"/>
<rect x="139" y="369" width="1" height="2" fill="#FF00FF"/>
<rect x="140" y="369" width="1" height="2" fill="#FF00FF"/>
<rect x="141" y="369" width="1" height="2" fill="#FF00FF"/>
<rect x="142" y="368" width="1" height="3" fill="#FF00FF"/>
<rect x="143" y="369" width="1" height="4" fill="#FF00FF"/>
<rect x="144" y="369" width="1" height="4" fill="#FF00FF"/>
<rect x="145" y="369" width="1" height="4" fill="#FF00FF"/>
<rect x="146" y="367" width="1" height="5" fill="#FF00FF"/>
<rect x="147" y="367" width="1" height="5" fill="#FF00FF"/>
<rect x="148" y="367" width="1" height="5" fill="#FF00FF"/>
<rect x="149" y="367" width="1" height="3" fill="#FF00FF"/>
<rect x="150" y="368" width="1" height="5" fill="#FF00FF"/>
<rect x="151" y="370" width="1" height="3" fill="#FF00FF"/>
<rect x="152" y="370" width="1" height="2" fill="#FF00FF"/>
<rect x="153" y="370" width="1" height="3" fill="#FF00FF"/>
<rect x="154" y="369" width="1" height="2" fill="#FF00FF"/>
<rect x="155" y="368" width="1" height="2" fill="#FF00FF"/>
<rect x="156" y="367" width="1" height="3" fill="#FF00FF"/>
<rect x="157" y="369" width="1" height="2" fill="#FF00FF"/>
<rect x="158" y="370" width="1" height="1" fill="#FF00FF"/>
<rect x="159" y="370" width="1" height="2" fill="#FF00FF"/>
<rect x="160" y="369" width="1" height="3" fill="#FF00FF"/>
<rect x="161" y="369" width="1" height="2" fill="#FF00FF"/>
<rect x="162" y="370" width="1" height="1" fill="#FF00FF"/>
<rect x="163" y="367" width="1" height="4" fill="#FF00FF"/>
<rect x="164" y="367" width="1" height="4" fill="#FF00FF"/>
<rect x="165" y="370" width="1" height="3" fill="#FF00FF"/>
<rect x="166" y="368" width="1" height="4" fill="#FF00FF"/>
<rect x="167" y="369" width="1" height="2" fill="#FF00FF"/>
<rect x="168" y="370" width="1" height="2" fill="#FF00FF"/>
<rect x="169" y="368" width="1" height="4" fill="#FF00FF"/>
<rect x="170" y="368" width="1" height="4" fill="#FF00FF"/>
<rect x="171" y="370" width="1" height="2" fill="#FF00FF"/>
<rect x="172" y="370" width="1" height="1" fill="#FF00FF"/>
<rect x="173" y="369" width="1" height="3" fill="#FF00FF"/>
<rect x="174" y="369" width="1" height="3" fill="#FF00FF"/>
<rect x="175" y="371" width="1" height="1" fill="#FF00FF"/>
<rect x="176" y="371" width="1" height="2" fill="#FF00FF"/>
<rect x="177" y="369" width="1" height="3" fill="#FF00FF"/>
<rect x="178" y="369" width="1" height="2" fill="#FF00FF"/>
<rect x="179" y="369" width="1" height="2" fill="#FF00FF"/>
<rect x="180" y="369" width="1" height="2" fill="#FF00FF"/>
<rect x="181" y="368" width="1" height="4" fill="#FF00FF"/>
<rect x="182" y="371" width="1" height="2" fill="#FF00FF"/>
<rect x="183" y="368" width="1" height="4" fill="#FF00FF"/>
<rect x="184" y="368" width="1" height="5" fill="#FF00FF"/>
<rect x="185" y="367" width="1" height="6" fill="#FF00FF"/>
<rect x="186" y="368" width="1" height="3" fill="#FF00FF"/>
<rect x="187" y="366" width="1" height="5" fill="#FF00FF"/>
<rect x="188" y="356" width="1" height="11" fill="#FF00FF"/>
<rect x="189" y="356" width="1" height="13" fill="#FF00FF"/>
<rect x="190" y="368" width="1" height="7" fill="#FF00FF"/>
<rect x="191" y="370" width="1" height="4" fill="#FF00FF"/>
<rect x="192" y="361" width="1" height="11" fill="#FF00FF"/>
<rect x="193" y="350" width="1" height="12" fill="#FF00FF"/>
<rect x="194" y="351" width="1" height="17" fill="#FF00FF"/>
<rect x="195" y="366" width="1" height="7" fill="#FF00FF"/>
<rect x="196" y="371" width="1" height="3" fill="#FF00FF"/>
<rect x="197" y="368" width="1" height="6" fill="#FF00FF"/>
<rect x="198" y="368" width="1" height="3" fill="#FF00FF"/>
<rect x="199" y="370" width="1" height="2" fill="#FF00FF"/>
<rect x="200" y="369" width="1" height="4" fill="#FF00FF"/>
<rect x="201" y="369" width="1" height="2" fill="#FF00FF"/>
<rect x="202" y="370" width="1" height="4" fill="#FF00FF"/>
<rect x="203" y="370" width="1" height="3" fill="#FF00FF"/>
<rect x="204" y="370" width="1" height="3" fill="#FF00FF"/>
<rect x="205" y="368" width="1" height="4" fill="#FF00FF"/>
<rect x="206" y="368" width="1" height="5" fill="#FF00FF"/>
<rect x="207" y="369" width="1" height="4" fill="#FF00FF"/>
<rect x="208" y="369" width="1" height="2" fill="#FF00FF"/>
<rect x="209" y="370" width="1" height="2" fill="#FF00FF"/>
<rect x="210" y="370" width="1" height="2" fill="#FF00FF"/>
<rect x="211" y="371" width="1" height="3" fill="#FF00FF"/>
<rect x="212" y="368" width="1" height="6" fill="#FF00FF"/>
<rect x="213" y="368" width="1" height="4" fill="#FF00FF"/>
<rect x="214" y="370" width="1" height="2" fill="#FF00FF"/>
<rect x="215" y="369" width="1" height="2" fill="#FF00FF"/>
<rect x="216" y="370" width="1" height="2" fill="#FF00FF"/>
<rect x="217" y="371" width="1" height="2" fill="#FF00FF"/>
<rect x="218" y="371" width="1" height="2" fill="#FF00FF"/>
<rect x="219" y="371" width="1" height="1" fill="#FF00FF"/>
<rect x="220" y="369" width="1" height="3" fill="#FF00FF"/>
<rect x="221" y="370" width="1" height="2" fill="#FF00FF"/>
<rect x="222" y="370" width="1" height="5" fill="#FF00FF"/>
<rect x="223" y="369" width="1" height="5" fill="#FF00FF"/>
<rect x="224" y="369" width="1" height="2" fill="#FF00FF"/>
<rect x="225" y="368" width="1" height="3" fill="#FF00FF"/>
<rect x="226" y="369" width="1" height="4" fill="#FF00FF"/>
<rect x="227" y="371" width="1" height="2" fill="#FF00FF"/>
<rect x="228" y="367" width="1" height="6" fill="#FF00FF"/>
<rect x="229" y="368" width="1" height="1" fill="#FF00FF"/>
<rect x="230" y="368" width="1" height="3" fill="#FF00FF"/>
<rect x="231" y="370" width="1" height="2" fill="#FF00FF"/>
<rect x="232" y="369" width="1" height="3" fill="#FF00FF"/>
<rect x="233" y="369" width="1" height="3" fill="#FF00FF"/>
<rect x="234" y="371" width="1" height="1" fill="#FF00FF"/>
<rect x="235" y="370" width="1" height="2" fill="#FF00FF"/>
<rect x="236" y="370" width="1" height="2" fill="#FF00FF"/>
<rect x="237" y="371" width="1" height="1" fill="#FF00FF"/>
<rect x="238" y="371" width="1" height="1" fill="#FF00FF"/>
<rect x="239" y="370" width="1" height="2" fill="#FF00FF"/>
<rect x="240" y="370" width="1" height="1" fill="#FF00FF"/>
<rect x="241" y="369" width="1" height="2" fill="#FF00FF"/>
<rect x="242" y="369" width="1" height="1" fill="#FF00FF"/>
<rect x="243" y="369" width="1" height="3" fill="#FF00FF"/>
<rect x="244" y="370" width="1" height="2" fill="#FF00FF"/>
<rect x="245" y="370" width="1" height="3" fill="#FF00FF"/>
<rect x="246" y="368" width="1" height="5" fill="#FF00FF"/>
<rect x="247" y="368" width="1" height="4" fill="#FF00FF"/>
<rect x="248" y="369" width="1" height="4" fill="#FF00FF"/>
<rect x="249" y="369" width="1" height="4" fill="#FF00FF"/>
<rect x="250" y="370" width="1" height="3" fill="#FF00FF"/>
<rect x="251" y="369" width="1" height="2" fill="#FF00FF"/>
<rect x="252" y="369" width="1" height="2" fill="#FF00FF"/>
<rect x="253" y="368" width="1" height="4" fill="#FF00FF"/>
<rect x="254" y="370" width="1" height="2" fill="#FF00FF"/>
<rect x="255" y="370" width="1" height="4" fill="#FF00FF"/>
<rect x="256" y="370" width="1" height="3" fill="#FF00FF"/>
<rect x="257" y="370" width="1" height="2" fill="#FF00FF"/>
<rect x="258" y="371" width="1" height="2" fill="#FF00FF"/>
<rect x="259" y="370" width="1" height="2" fill="#FF00FF"/>
<rect x="260" y="369" width="1" height="2" fill="#FF00FF"/>
<rect x="261" y="368" width="1" height="2" fill="#FF00FF"/>
<rect x="262" y="369" width="1" height="4" fill="#FF00FF"/>
<rect x="263" y="369" width="1" height="3" fill="#FF00FF"/>
<rect x="264" y="368" width="1" height="3" fill="#FF00FF"/>
<rect x="265" y="369" width="1" height="2" fill="#FF00FF"/>
<rect x="266" y="367" width="1" height="4" fill="#FF00FF"/>
<rect x="267" y="368" width="1" height="2" fill="#FF00FF"/>
<rect x="268" y="369" width="1" height="3" fill="#FF00FF"/>
<rect x="269" y="370" width="1" height="2" fill="#FF00FF"/>
<rect x="270" y="369" width="1" height="2" fill="#FF00FF"/>
<rect x="271" y="370" width="1" height="3" fill="#FF00FF"/>
<rect x="272" y="370" width="1" height="3" fill="#FF00FF"/>
<rect x="273" y="370" width="1" height="1" fill="#FF00FF"/>
<rect x="274" y="369" width="1" height="3" fill="#FF00FF"/>
<rect x="275" y="369" width="1" height="3" fill="#FF00FF"/>
<rect x="276" y="368" width="1" height="4" fill="#FF00FF"/>
<rect x="277" y="368" width="1" height="3" fill="#FF00FF"/>
<rect x="278" y="370" width="1" height="2" fill="#FF00FF"/>
<rect x="279" y="370" width="1" height="1" fill="#FF00FF"/>
<rect x="280" y="370" width="1" height="5" fill="#FF00FF"/>
<rect x="281" y="367" width="1" height="7" fill="#FF00FF"/>
<rect x="282" y="368" width="1" height="6" fill="#FF00FF"/>
<rect x="283" y="372" width="1" height="2" fill="#FF00FF"/>
<rect x="284" y="369" width="1" height="5" fill="#FF00FF"/>
<rect x="285" y="369" width="1" height="2" fill="#FF00FF"/>
<rect x="286" y="367" width="1" height="4" fill="#FF00FF"/>
<rect x="287" y="367" width="1" height="5" fill="#FF00FF"/>
<rect x="288" y="368" width="1" height="4" fill="#FF00FF"/>
<rect x="289" y="368" width="1" height="4" fill="#FF00FF"/>
<rect x="290" y="369" width="1" height="4" fill="#FF00FF"/>
<rect x="291" y="369" width="1" height="4" fill="#FF00FF"/>
<rect x="292" y="369" width="1" height="4" fill="#FF00FF"/>
<rect x="293" y="369" width="1" height="2" fill="#FF00FF"/>
<rect x="294" y="370" width="1" height="5" fill="#FF00FF"/>
<rect x="295" y="373" width="1" height="1" fill="#FF00FF"/>
<rect x="296" y="367" width="1" height="7" fill="#FF00FF"/>
<rect x="297" y="367" width="1" height="6" fill="#FF00FF"/>
<rect x="298" y="371" width="1" height="2" fill="#FF00FF"/>
<rect x="299" y="371" width="1" height="3" fill="#FF00FF"/>
<rect x="300" y="368" width="1" height="6" fill="#FF00FF"/>
<rect x="301" y="368" width="1" height="7" fill="#FF00FF"/>
<rect x="302" y="370" width="1" height="4" fill="#FF00FF"/>
<rect x="303" y="369" width="1" height="2" fill="#FF00FF"/>
<rect x="304" y="368" width="1" height="4" fill="#FF00FF"/>
<rect x="305" y="368" width="1" height="4" fill="#FF00FF"/>
<rect x="306" y="370" width="1" height="2" fill="#FF00FF"/>
<rect x="307" y="370" width="1" height="3" fill="#FF00FF"/>
<rect x="308" y="369" width="1" height="4" fill="#FF00FF"/>
<rect x="309" y="369" width="1" height="6" fill="#FF00FF"/>
<rect x="310" y="369" width="1" height="5" fill="#FF00FF"/>
<rect x="311" y="369" width="1" height="3" fill="#FF00FF"/>
<rect x="312" y="367" width="1" height="5" fill="#FF00FF"/>
<rect x="313" y="367" width="1" height="6" fill="#FF00FF"/>
<rect x="314" y="372" width="1" height="1" fill="#FF00FF"/>
<rect x="315" y="371" width="1" height="3" fill="#FF00FF"/>
<rect x="316" y="368" width="1" height="4" fill="#FF00FF"/>
<rect x="317" y="369" width="1" height="6" fill="#FF00FF"/>
<rect x="318" y="372" width="1" height="2" fill="#FF00FF"/>
<rect x="319" y="370" width="1" height="3" fill="#FF00FF"/>
<rect x="320" y="371" width="1" height="3" fill="#FF00FF"/>
<rect x="321" y="368" width="1" height="6" fill="#FF00FF"/>
<rect x="322" y="368" width="1" height="6" fill="#FF00FF"/>
<rect x="323" y="367" width="1" height="7" fill="#FF00FF"/>
<rect x="324" y="367" width="1" height="3" fill="#FF00FF"/>
<rect x="325" y="369" width="1" height="3" fill="#FF00FF"/>
<rect x="326" y="371" width="1" height="1" fill="#FF00FF"/>
<rect x="327" y="370" width="1" height="3" fill="#FF00FF"/>
<rect x="328" y="369" width="1" height="4" fill="#FF00FF"/>
<rect x="329" y="368" width="1" height="5" fill="#FF00FF"/>
<rect x="330" y="368" width="1" height="4" fill="#FF00FF"/>
<rect x="331" y="369" width="1" height="3" fill="#FF00FF"/>
<rect x="332" y="371" width="1" height="1" fill="#FF00FF"/>
<rect x="333" y="369" width="1" height="3" fill="#FF00FF"/>
<rect x="334" y="368" width="1" height="4" fill="#FF00FF"/>
<rect x="335" y="367" width="1" height="5" fill="#FF00FF"/>
<rect x="336" y="367" width="1" height="2" fill="#FF00FF"/>
<rect x="337" y="367" width="1" height="4" fill="#FF00FF"/>
<rect x="338" y="369" width="1" height="2" fill="#FF00FF"/>
<rect x="339" y="368" width="1" height="2" fill="#FF00FF"/>
<rect x="340" y="368" width="1" height="6" fill="#FF00FF"/>
<rect x="341" y="370" width="1" height="4" fill="#FF00FF"/>
<rect x="342" y="370" width="1" height="3" fill="#FF00FF"/>
<rect x="343" y="369" width="1" height="4" fill="#FF00FF"/>
<rect x="344" y="368" width="1" height="2" fill="#FF00FF"/>
<rect x="345" y="369" width="1" height="1" fill="#FF00FF"/>
<rect x="346" y="369" width="1" height="3" fill="#FF00FF"/>
<rect x="347" y="369" width="1" height="3" fill="#FF00FF"/>
<rect x="348" y="369" width="1" height="4" fill="#FF00FF"/>
<rect x="349" y="369" width="1" height="4" fill="#FF00FF"/>
<rect x="350" y="369" width="1" height="2" fill="#FF00FF"/>
<rect x="351" y="369" width="1" height="2" fill="#FF00FF"/>
<rect x="352" y="368" width="1" height="3" fill="#FF00FF"/>
<rect x="353" y="370" width="1" height="1" fill="#FF00FF"/>
<rect x="354" y="370" width="1" height="1" fill="#FF00FF"/>
<rect x="355" y="367" width="1" height="5" fill="#FF00FF"/>
<rect x="356" y="367" width="1" height="3" fill="#FF00FF"/>
<rect x="357" y="367" width="1" height="3" fill="#FF00FF"/>
<rect x="358" y="367" width="1" height="4" fill="#FF00FF"/>
<rect x="359" y="368" width="1" height="4" fill="#FF00FF"/>
<rect x="360" y="368" width="1" height="3" fill="#FF00FF"/>
<rect x="361" y="369" width="1" height="2" fill="#FF00FF"/>
<rect x="362" y="369" width="1" height="1" fill="#FF00FF"/>
<rect x="363" y="368" width="1" height="2" fill="#FF00FF"/>
<rect x="364" y="365" width="1" height="5" fill="#FF00FF"/>
<rect x="365" y="366" width="1" height="4" fill="#FF00FF"/>
<rect x="366" y="368" width="1" height="3" fill="#FF00FF"/>
<rect x="367" y="369" width="1" height="2" fill="#FF00FF"/>
<rect x="368" y="368" width="1" height="2" fill="#FF00FF"/>
<rect x="369" y="368" width="1" height="2" fill="#FF00FF"/>
<rect x="370" y="366" width="1" height="3" fill="#FF00FF"/>
<rect x="371" y="367" width="1" height="4" fill="#FF00FF"/>
<rect x="372" y="369" width="1" height="2" fill="#FF00FF"/>
<rect x="373" y="367" width="1" height="3" fill="#FF00FF"/>
<rect x="374" y="367" width="1" height="2" fill="#FF00FF"/>
<rect x="375" y="366" width="1" height="3" fill="#FF00FF"/>
<rect x="376" y="365" width="1" height="5" fill="#FF00FF"/>
<rect x="377" y="368" width="1" height="2" fill="#FF00FF"/>
<rect x="378" y="367" width="1" height="2" fill="#FF00FF"/>
<rect x="379" y="368" width="1" height="1" fill="#FF00FF"/>
<rect x="380" y="368" width="1" height="1" fill="#FF00FF"/>
<rect x="381" y="366" width="1" height="3" fill="#FF00FF"/>
<rect x="382" y="367" width="1" height="1" fill="#FF00FF"/>
<rect x="383" y="365" width="1" height="4" fill="#FF00FF"/>
<rect x="384" y="364" width="1" height="4" fill="#FF00FF"/>
<rect x="385" y="367" width="1" height="2" fill="#FF00FF"/>
<rect x="386" y="362" width="1" height="7" fill="#FF00FF"/>
<rect x="387" y="362" width="1" height="7" fill="#FF00FF"/>
<rect x="388" y="366" width="1" height="3" fill="#FF00FF"/>
<rect x="389" y="366" width="1" height="1" fill="#FF00FF"/>
<rect x="390" y="366" width="1" height="1" fill="#FF00FF"/>
<rect x="391" y="365" width="1" height="3" fill="#FF00FF"/>
<rect x="392" y="364" width="1" height="4" fill="#FF00FF"/>
<rect x="393" y="364" width="1" height="3" fill="#FF00FF"/>
<rect x="394" y="366" width="1" height="2" fill="#FF00FF"/>
<rect x="395" y="367" width="1" height="1" fill="#FF00FF"/>
<rect x="396" y="365" width="1" height="3" fill="#FF00FF"/>
<rect x="397" y="365" width="1" height="2" fill="#FF00FF"/>
<rect x="398" y="366" width="1" height="2" fill="#FF00FF"/>
<rect x="399" y="364" width="1" height="3" fill="#FF00FF"/>
<rect x="400" y="364" width="1" height="2" fill="#FF00FF"/>
<rect x="401" y="365" width="1" height="4" fill="#FF00FF"/>
<rect x="402" y="366" width="1" height="3" fill="#FF00FF"/>
<rect x="403" y="366" width="1" height="3" fill="#FF00FF"/>
<rect x="404" y="367" width="1" height="2" fill="#FF00FF"/>
<rect x="405" y="366" width="1" height="3" fill="#FF00FF"/>
<rect x="406" y="365" width="1" height="3" fill="#FF00FF"/>
<rect x="407" y="365" width="1" height="3" fill="#FF00FF"/>
<rect x="408" y="365" width="1" height="3" fill="#FF00FF"/>
<rect x="409" y="366" width="1" height="1" fill="#FF00FF"/>
<rect x="410" y="366" width="1" height="2" fill="#FF00FF"/>
<rect x="411" y="364" width="1" height="4" fill="#FF00FF"/>
<rect x="412" y="365" width="1" height="2" fill="#FF00FF"/>
<rect x="413" y="366" width="1" height="2" fill="#FF00FF"/>
<rect x="414" y="364" width="1" height="4" fill="#FF00FF"/>
<rect x="415" y="364" width="1" height="2" fill="#FF00FF"/>
<rect x="416" y="364" width="1" height="3" fill="#FF00FF"/>
<rect x="417" y="365" width="1" height="3" fill="#FF00FF"/>
<rect x="418" y="364" width="1" height="2" fill="#FF00FF"/>
<rect x="419" y="364" width="1" height="2" fill="#FF00FF"/>
<rect x="420" y="364" width="1" height="2" fill="#FF00FF"/>
<rect x="421" y="363" width="1" height="2" fill="#FF00FF"/>
<rect x="422" y="363" width="1" height="2" fill="#FF00FF"/>
<rect x="423" y="363" width="1" height="1" fill="#FF00FF"/>
<rect x="424" y="363" width="1" height="3" fill="#FF00FF"/>
<rect x="425" y="363" width="1" height="2" fill="#FF00FF"/>
<rect x="426" y="363" width="1" height="1" fill="#FF00FF"/>
<rect x="427" y="363" width="1" height="1" fill="#FF00FF"/>
<rect x="428" y="362" width="1" height="3" fill="#FF00FF"/>
<rect x="429" y="361" width="1" height="4" fill="#FF00FF"/>
<rect x="430" y="361" width="1" height="2" fill="#FF00FF"/>
<rect x="431" y="362" width="1" height="2" fill="#FF00FF"/>
<rect x="432" y="360" width="1" height="4" fill="#FF00FF"/>
<rect x="433" y="361" width="1" height="1" fill="#FF00FF"/>
<rect x="434" y="361" width="1" height="5" fill="#FF00FF"/>
<rect x="435" y="362" width="1" height="4" fill="#FF00FF"/>
<rect x="436" y="362" width="1" height="2" fill="#FF00FF"/>
<rect x="437" y="361" width="1" height="2" fill="#FF00FF"/>
<rect x="438" y="361" width="1" height="2" fill="#FF00FF"/>
<rect x="439" y="361" width="1" height="3" fill="#FF00FF"/>
<rect x="440" y="360" width="1" height="4" fill="#FF00FF"/>
<rect x="441" y="359" width="1" height="5" fill="#FF00FF"/>
<rect x="442" y="361" width="1" height="3" fill="#FF00FF"/>
<rect x="443" y="360" width="1" height="2" fill="#FF00FF"/>
<rect x="444" y="360" width="1" height="2" fill="#FF00FF"/>
<rect x="445" y="360" width="1" height="2" fill="#FF00FF"/>
<rect x="446" y="356" width="1" height="5" fill="#FF00FF"/>
<rect x="447" y="357" width="1" height="5" fill="#FF00FF"/>
</svg>
<svg style="position:absolute;left:0;top:0" width="641" height="524" font-family="Liberation Sans" font-size="11" fill="#000"><g filter="url(#crisp)">
<text x="41.5" y="135" text-anchor="end">20</text>
<text x="41.5" y="162" text-anchor="end">16</text>
<text x="41.5" y="189" text-anchor="end">12</text>
<text x="41.5" y="215" text-anchor="end">8</text>
<text x="41.5" y="242" text-anchor="end">4</text>
<text x="470.5" y="135" text-anchor="start">16</text>
<text x="470.5" y="152" text-anchor="start">14</text>
<text x="470.5" y="169" text-anchor="start">12</text>
<text x="470.5" y="185" text-anchor="start">10</text>
<text x="470.5" y="202" text-anchor="start">8</text>
<text x="470.5" y="219" text-anchor="start">6</text>
<text x="470.5" y="235" text-anchor="start">4</text>
<text x="470.5" y="252" text-anchor="start">2</text>
<text x="50" y="279" text-anchor="middle">0.0</text>
<text x="96" y="279" text-anchor="middle">0.5</text>
<text x="142" y="279" text-anchor="middle">1.0</text>
<text x="189" y="279" text-anchor="middle">1.5</text>
<text x="235" y="279" text-anchor="middle">2.0</text>
<text x="282" y="279" text-anchor="middle">2.5</text>
<text x="328" y="279" text-anchor="middle">3.0</text>
<text x="375" y="279" text-anchor="middle">3.5</text>
<text x="421" y="279" text-anchor="middle">4.0</text>
<text x="469" y="279" text-anchor="middle">4.5</text>
<text x="41.5" y="297" text-anchor="end">10</text>
<text x="41.5" y="324" text-anchor="end">8</text>
<text x="41.5" y="351" text-anchor="end">6</text>
<text x="41.5" y="377" text-anchor="end">4</text>
<text x="41.5" y="404" text-anchor="end">2</text>
<text x="470.5" y="297" text-anchor="start">20</text>
<text x="470.5" y="324" text-anchor="start">16</text>
<text x="470.5" y="351" text-anchor="start">12</text>
<text x="470.5" y="377" text-anchor="start">8</text>
<text x="470.5" y="404" text-anchor="start">4</text>
<text x="50" y="441" text-anchor="middle">0.0</text>
<text x="96" y="441" text-anchor="middle">0.5</text>
<text x="142" y="441" text-anchor="middle">1.0</text>
<text x="189" y="441" text-anchor="middle">1.5</text>
<text x="235" y="441" text-anchor="middle">2.0</text>
<text x="282" y="441" text-anchor="middle">2.5</text>
<text x="328" y="441" text-anchor="middle">3.0</text>
<text x="375" y="441" text-anchor="middle">3.5</text>
<text x="421" y="441" text-anchor="middle">4.0</text>
<text x="469" y="441" text-anchor="middle">4.5</text>
</g></svg>
<div style="left:492px;top:127px;width:139px;height:84px;border:1px solid #FFFFFF"></div>
<div style="left:491px;top:126px;width:139px;height:84px;border:1px solid #808080"></div>
<div style="left:498px;top:126px;width:43px;height:2px;background:#D4D0C8"></div>
<div class="t" style="left:500px;top:122px;text-align:left;">Disc info</div>
<div class="t" style="left:499px;top:136px;text-align:left;">Type:</div>
<div class="t" style="left:545px;top:136px;text-align:left;color:#00007F">DVD+R</div>
<div class="t" style="left:499px;top:153px;text-align:left;">ID:</div>
<div class="t" style="left:545px;top:153px;text-align:left;color:#00007F">YUDEN000 T02</div>
<div class="t" style="left:499px;top:171px;text-align:left;">Date:</div>
<div class="t" style="left:545px;top:171px;text-align:left;color:#00007F">2 May 2006</div>
<div class="t" style="left:499px;top:188px;text-align:left;">Label:</div>
<div class="t" style="left:545px;top:188px;text-align:left;color:#00007F;letter-spacing:-0.15px">[PSX].Games_24</div>
<div style="left:492px;top:218px;width:139px;height:203px;border:1px solid #FFFFFF"></div>
<div style="left:491px;top:217px;width:139px;height:203px;border:1px solid #808080"></div>
<div style="left:498px;top:217px;width:42px;height:2px;background:#D4D0C8"></div>
<div class="t" style="left:500px;top:212px;text-align:left;">Settings</div>
<div class="t" style="left:499px;top:227px;text-align:left;">Speed:</div>
<div style="left:500px;top:242px;width:84px;height:21px;background:#FFFFFF"></div>
<div style="left:500px;top:242px;width:83px;height:20px;background:#808080"></div>
<div style="left:501px;top:243px;width:82px;height:19px;background:#D4D0C8"></div>
<div style="left:501px;top:243px;width:81px;height:18px;background:#404040"></div>
<div style="left:502px;top:244px;width:80px;height:17px;background:#FFFFFF"></div>
<div class="t" style="left:503px;top:247px;text-align:left;">8</div>
<svg style="position:absolute;left:513px;top:248px" width="7" height="9" shape-rendering="crispEdges"><path fill="#000" d="M0 0h1v1h-1zM6 0h1v1h-1zM0 1h1v1h-1zM6 1h1v1h-1zM1 2h1v1h-1zM5 2h1v1h-1zM2 3h1v1h-1zM4 3h1v1h-1zM3 4h1v1h-1zM2 5h1v1h-1zM4 5h1v1h-1zM1 6h1v1h-1zM5 6h1v1h-1zM0 7h1v1h-1zM6 7h1v1h-1zM0 8h1v1h-1zM6 8h1v1h-1z"/></svg>
<div style="left:566px;top:244px;width:16px;height:17px;background:#404040"></div>
<div style="left:566px;top:244px;width:15px;height:16px;background:#D4D0C8"></div>
<div style="left:567px;top:245px;width:14px;height:15px;background:#808080"></div>
<div style="left:567px;top:245px;width:13px;height:14px;background:#FFFFFF"></div>
<div style="left:568px;top:246px;width:12px;height:13px;background:#D4D0C8"></div>
<svg style="position:absolute;left:566px;top:244px" width="16" height="17" shape-rendering="crispEdges"><path fill="#000" d="M4 6h7v1h-7zM5 7h5v1h-5zM6 8h3v1h-3zM7 9h1v1h-1z"/></svg>
<div style="left:592px;top:240px;width:23px;height:23px;background:#404040"></div>
<div style="left:592px;top:240px;width:22px;height:22px;background:#FFFFFF"></div>
<div style="left:593px;top:241px;width:21px;height:21px;background:#808080"></div>
<div style="left:593px;top:241px;width:20px;height:20px;background:#D4D0C8"></div>
<div style="left:594px;top:242px;width:19px;height:19px;background:#D4D0C8"></div>
<svg style="position:absolute;left:592px;top:240px" width="23" height="23" shape-rendering="crispEdges">
<path fill="#000" d="M4 3h14v16h-14z"/><path fill="#FFF" d="M5 4h12v14h-12z"/>
<path fill="#008000" d="M7 8h1v3h-1zM8 7h2v1h-2zM10 5h1v5h-1zM11 6h1v3h-1zM12 7h1v1h-1zM14 11h1v3h-1zM12 14h2v1h-2zM11 12h1v5h-1zM10 13h1v3h-1zM9 14h1v1h-1z"/>
</svg>
<div class="t" style="left:502px;top:274px;text-align:left;">Start:</div>
<div style="left:554px;top:268px;width:60px;height:20px;background:#FFFFFF"></div>
<div style="left:554px;top:268px;width:59px;height:19px;background:#808080"></div>
<div style="left:555px;top:269px;width:58px;height:18px;background:#D4D0C8"></div>
<div style="left:555px;top:269px;width:57px;height:17px;background:#404040"></div>
<div style="left:556px;top:270px;width:56px;height:16px;background:#FFFFFF"></div>
<div class="t" style="left:557px;top:272px;text-align:left;">0000 MB</div>
<div class="t" style="left:502px;top:296px;text-align:left;">End:</div>
<div style="left:554px;top:291px;width:60px;height:20px;background:#FFFFFF"></div>
<div style="left:554px;top:291px;width:59px;height:19px;background:#808080"></div>
<div style="left:555px;top:292px;width:58px;height:18px;background:#D4D0C8"></div>
<div style="left:555px;top:292px;width:57px;height:17px;background:#404040"></div>
<div style="left:556px;top:293px;width:56px;height:16px;background:#FFFFFF"></div>
<div class="t" style="left:557px;top:295px;text-align:left;">4415 MB</div>
<div style="left:502px;top:316px;width:13px;height:13px;background:#FFFFFF"></div>
<div style="left:502px;top:316px;width:12px;height:12px;background:#808080"></div>
<div style="left:503px;top:317px;width:11px;height:11px;background:#D4D0C8"></div>
<div style="left:503px;top:317px;width:10px;height:10px;background:#404040"></div>
<div style="left:504px;top:318px;width:9px;height:9px;background:#FFFFFF"></div>
<div class="t" style="left:520px;top:316px;text-align:left;">Quick scan</div>
<div style="left:502px;top:337px;width:13px;height:13px;background:#FFFFFF"></div>
<div style="left:502px;top:337px;width:12px;height:12px;background:#808080"></div>
<div style="left:503px;top:338px;width:11px;height:11px;background:#D4D0C8"></div>
<div style="left:503px;top:338px;width:10px;height:10px;background:#404040"></div>
<div style="left:504px;top:339px;width:9px;height:9px;background:#FFFFFF"></div>
<svg style="position:absolute;left:502px;top:337px" width="13" height="13" shape-rendering="crispEdges"><path fill="#000000" d="M3 5h1v3h-1zM4 6h1v3h-1zM5 7h1v3h-1zM6 6h1v3h-1zM7 5h1v3h-1zM8 4h1v3h-1zM9 3h1v3h-1z"/></svg>
<div class="t" style="left:520px;top:338px;text-align:left;">Show C1/PIE</div>
<div style="left:502px;top:353px;width:13px;height:13px;background:#FFFFFF"></div>
<div style="left:502px;top:353px;width:12px;height:12px;background:#808080"></div>
<div style="left:503px;top:354px;width:11px;height:11px;background:#D4D0C8"></div>
<div style="left:503px;top:354px;width:10px;height:10px;background:#404040"></div>
<div style="left:504px;top:355px;width:9px;height:9px;background:#FFFFFF"></div>
<svg style="position:absolute;left:502px;top:353px" width="13" height="13" shape-rendering="crispEdges"><path fill="#000000" d="M3 5h1v3h-1zM4 6h1v3h-1zM5 7h1v3h-1zM6 6h1v3h-1zM7 5h1v3h-1zM8 4h1v3h-1zM9 3h1v3h-1z"/></svg>
<div class="t" style="left:520px;top:354px;text-align:left;">Show C2/PIF</div>
<div style="left:502px;top:370px;width:13px;height:13px;background:#FFFFFF"></div>
<div style="left:502px;top:370px;width:12px;height:12px;background:#808080"></div>
<div style="left:503px;top:371px;width:11px;height:11px;background:#D4D0C8"></div>
<div style="left:503px;top:371px;width:10px;height:10px;background:#404040"></div>
<div style="left:504px;top:372px;width:9px;height:9px;background:#FFFFFF"></div>
<svg style="position:absolute;left:502px;top:370px" width="13" height="13" shape-rendering="crispEdges"><path fill="#000000" d="M3 5h1v3h-1zM4 6h1v3h-1zM5 7h1v3h-1zM6 6h1v3h-1zM7 5h1v3h-1zM8 4h1v3h-1zM9 3h1v3h-1z"/></svg>
<div class="t" style="left:520px;top:371px;text-align:left;">Show jitter</div>
<div style="left:502px;top:386px;width:13px;height:13px;background:#FFFFFF"></div>
<div style="left:502px;top:386px;width:12px;height:12px;background:#808080"></div>
<div style="left:503px;top:387px;width:11px;height:11px;background:#D4D0C8"></div>
<div style="left:503px;top:387px;width:10px;height:10px;background:#404040"></div>
<div style="left:504px;top:388px;width:9px;height:9px;background:#FFFFFF"></div>
<svg style="position:absolute;left:502px;top:386px" width="13" height="13" shape-rendering="crispEdges"><path fill="#000000" d="M3 5h1v3h-1zM4 6h1v3h-1zM5 7h1v3h-1zM6 6h1v3h-1zM7 5h1v3h-1zM8 4h1v3h-1zM9 3h1v3h-1z"/></svg>
<div class="t" style="left:520px;top:387px;text-align:left;">Show read speed</div>
<div style="left:502px;top:402px;width:13px;height:13px;background:#FFFFFF"></div>
<div style="left:502px;top:402px;width:12px;height:12px;background:#808080"></div>
<div style="left:503px;top:403px;width:11px;height:11px;background:#D4D0C8"></div>
<div style="left:503px;top:403px;width:10px;height:10px;background:#404040"></div>
<div style="left:504px;top:404px;width:9px;height:9px;background:#D4D0C8"></div>
<svg style="position:absolute;left:502px;top:402px" width="13" height="13" shape-rendering="crispEdges"><path fill="#808080" d="M3 5h1v3h-1zM4 6h1v3h-1zM5 7h1v3h-1zM6 6h1v3h-1zM7 5h1v3h-1zM8 4h1v3h-1zM9 3h1v3h-1z"/></svg>
<div class="t" style="left:521px;top:404px;text-align:left;color:#FFFFFF;letter-spacing:-0.15px">Show write speed</div>
<div class="t" style="left:520px;top:403px;text-align:left;color:#808080;letter-spacing:-0.15px">Show write speed</div>
<div style="left:492px;top:428px;width:139px;height:25px;border:1px solid #FFFFFF"></div>
<div style="left:491px;top:427px;width:139px;height:25px;border:1px solid #808080"></div>
<div class="t" style="left:502px;top:434px;text-align:left;letter-spacing:-0.22px">Quality score:</div>
<div class="t" style="left:561px;top:434px;width:60px;text-align:right;color:#00007F">95</div>
<div style="left:492px;top:460px;width:139px;height:56px;border:1px solid #FFFFFF"></div>
<div style="left:491px;top:459px;width:139px;height:56px;border:1px solid #808080"></div>
<div class="t" style="left:502px;top:469px;text-align:left;letter-spacing:-0.22px">Progress:</div>
<div class="t" style="left:529px;top:469px;width:81px;text-align:right;color:#00007F">100</div>
<div class="t" style="left:502px;top:484px;text-align:left;letter-spacing:-0.22px">Position:</div>
<div class="t" style="left:541px;top:484px;width:81px;text-align:right;color:#00007F">4414 MB</div>
<div class="t" style="left:502px;top:499px;text-align:left;letter-spacing:-0.22px">Speed:</div>
<div class="t" style="left:531px;top:499px;width:81px;text-align:right;color:#00007F">8.28</div>
<div style="left:15px;top:461px;width:146px;height:56px;border:1px solid #FFFFFF"></div>
<div style="left:14px;top:460px;width:146px;height:56px;border:1px solid #808080"></div>
<div style="left:23px;top:460px;width:53px;height:2px;background:#D4D0C8"></div>
<div style="left:24px;top:457px;width:9px;height:9px;background:#000"></div>
<div style="left:25px;top:458px;width:7px;height:7px;background:#00FFFF"></div>
<div class="t" style="left:35px;top:454px;text-align:left;letter-spacing:-0.22px">PI Errors</div>
<div class="t" style="left:22px;top:470px;text-align:left;">Average:</div>
<div class="t" style="left:70px;top:470px;width:80px;text-align:right;color:#00007F">3.88</div>
<div class="t" style="left:22px;top:485px;text-align:left;letter-spacing:-0.22px">Maximum:</div>
<div class="t" style="left:70px;top:485px;width:80px;text-align:right;color:#00007F">16</div>
<div class="t" style="left:22px;top:500px;text-align:left;letter-spacing:-0.22px">Total:</div>
<div class="t" style="left:70px;top:500px;width:80px;text-align:right;color:#00007F">39330</div>
<div style="left:173px;top:461px;width:146px;height:56px;border:1px solid #FFFFFF"></div>
<div style="left:172px;top:460px;width:146px;height:56px;border:1px solid #808080"></div>
<div style="left:181px;top:460px;width:62px;height:2px;background:#D4D0C8"></div>
<div style="left:182px;top:457px;width:9px;height:9px;background:#000"></div>
<div style="left:183px;top:458px;width:7px;height:7px;background:#FFFF00"></div>
<div class="t" style="left:193px;top:454px;text-align:left;letter-spacing:-0.22px">PI Failures</div>
<div class="t" style="left:180px;top:470px;text-align:left;">Average:</div>
<div class="t" style="left:231px;top:470px;width:80px;text-align:right;color:#00007F">0.53</div>
<div class="t" style="left:180px;top:485px;text-align:left;letter-spacing:-0.22px">Maximum:</div>
<div class="t" style="left:231px;top:485px;width:80px;text-align:right;color:#00007F">9</div>
<div class="t" style="left:180px;top:500px;text-align:left;letter-spacing:-0.22px">Total:</div>
<div class="t" style="left:231px;top:500px;width:80px;text-align:right;color:#00007F">7100</div>
<div style="left:14px;top:516px;width:147px;height:1px;background:#D4D0C8"></div>
<div style="left:172px;top:516px;width:147px;height:1px;background:#D4D0C8"></div>
<div style="left:332px;top:461px;width:147px;height:41px;border:1px solid #FFFFFF"></div>
<div style="left:331px;top:460px;width:147px;height:41px;border:1px solid #808080"></div>
<div style="left:340px;top:460px;width:35px;height:2px;background:#D4D0C8"></div>
<div style="left:341px;top:457px;width:9px;height:9px;background:#000"></div>
<div style="left:342px;top:458px;width:7px;height:7px;background:#FF00FF"></div>
<div class="t" style="left:352px;top:454px;text-align:left;letter-spacing:-0.22px">Jitter</div>
<div class="t" style="left:339px;top:470px;text-align:left;">Average:</div>
<div class="t" style="left:378px;top:470px;width:80px;text-align:right;color:#00007F">8.59</div>
<div class="t" style="left:339px;top:485px;text-align:left;letter-spacing:-0.22px">Maximum:</div>
<div class="t" style="left:378px;top:485px;width:80px;text-align:right;color:#00007F">11.5</div>
<svg style="position:absolute;left:461px;top:472px" width="7" height="8" shape-rendering="crispEdges"><path fill="#00007F" d="M1 0h1v1h-1zM2 0h1v1h-1zM6 0h1v1h-1zM0 1h1v1h-1zM3 1h1v1h-1zM5 1h1v1h-1zM1 2h1v1h-1zM2 2h1v1h-1zM4 2h1v1h-1zM3 3h1v1h-1zM2 4h1v1h-1zM1 5h1v1h-1zM4 5h1v1h-1zM5 5h1v1h-1zM0 6h1v1h-1zM3 6h1v1h-1zM6 6h1v1h-1zM4 7h1v1h-1zM5 7h1v1h-1z"/></svg>
<svg style="position:absolute;left:460px;top:487px" width="7" height="8" shape-rendering="crispEdges"><path fill="#00007F" d="M1 0h1v1h-1zM2 0h1v1h-1zM6 0h1v1h-1zM0 1h1v1h-1zM3 1h1v1h-1zM5 1h1v1h-1zM1 2h1v1h-1zM2 2h1v1h-1zM4 2h1v1h-1zM3 3h1v1h-1zM2 4h1v1h-1zM1 5h1v1h-1zM4 5h1v1h-1zM5 5h1v1h-1zM0 6h1v1h-1zM3 6h1v1h-1zM6 6h1v1h-1zM4 7h1v1h-1zM5 7h1v1h-1z"/></svg>
<svg style="position:absolute;left:614px;top:471px" width="7" height="8" shape-rendering="crispEdges"><path fill="#00007F" d="M1 0h1v1h-1zM2 0h1v1h-1zM6 0h1v1h-1zM0 1h1v1h-1zM3 1h1v1h-1zM5 1h1v1h-1zM1 2h1v1h-1zM2 2h1v1h-1zM4 2h1v1h-1zM3 3h1v1h-1zM2 4h1v1h-1zM1 5h1v1h-1zM4 5h1v1h-1zM5 5h1v1h-1zM0 6h1v1h-1zM3 6h1v1h-1zM6 6h1v1h-1zM4 7h1v1h-1zM5 7h1v1h-1z"/></svg>
<svg style="position:absolute;left:614px;top:501px" width="7" height="9" shape-rendering="crispEdges"><path fill="#00007F" d="M0 0h1v1h-1zM6 0h1v1h-1zM0 1h1v1h-1zM6 1h1v1h-1zM1 2h1v1h-1zM5 2h1v1h-1zM2 3h1v1h-1zM4 3h1v1h-1zM3 4h1v1h-1zM2 5h1v1h-1zM4 5h1v1h-1zM1 6h1v1h-1zM5 6h1v1h-1zM0 7h1v1h-1zM6 7h1v1h-1zM0 8h1v1h-1zM6 8h1v1h-1z"/></svg>
<div class="t" style="left:340px;top:504px;text-align:left;letter-spacing:-0.22px">PO failures:</div>
<div class="t" style="left:390px;top:504px;width:80px;text-align:right;color:#00007F">0</div>
</div></body></html>
